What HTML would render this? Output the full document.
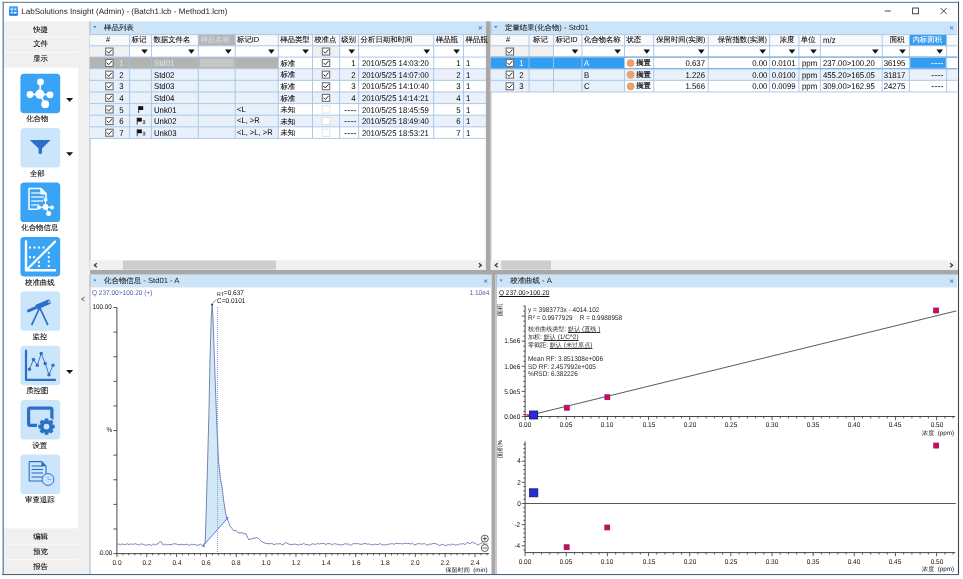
<!DOCTYPE html>
<html><head><meta charset="utf-8"><title>LabSolutions Insight</title>
<style>
html,body{margin:0;padding:0;background:#fff;}
body{width:963px;height:579px;overflow:hidden;position:relative;font-family:"Liberation Sans", sans-serif;text-rendering:geometricPrecision;}
.c{font-size:7.4px;-webkit-text-stroke:.07px currentColor}.d{font-size:6.1px}.e{font-size:7.3px;-webkit-text-stroke:.2px currentColor}
#g{position:absolute;left:0;top:0;}
#tx{position:absolute;left:0;top:0;width:963px;height:579px;filter:blur(.3px);}
.t{position:absolute;white-space:nowrap;font-family:"Liberation Sans", sans-serif;}
u,.u{text-decoration:underline;text-decoration-thickness:.6px;text-underline-offset:.6px}
</style></head><body>
<svg id="g" width="963" height="579" viewBox="0 0 963 579">
<rect x="0.00" y="0.00" width="963.00" height="579.00" fill="#ffffff" />
<rect x="3.30" y="2.30" width="955.50" height="572.40" fill="#ffffff" />
<rect x="4.00" y="21.30" width="954.60" height="553.00" fill="#f0f0f0" />
<line x1="3.20" y1="1.70" x2="3.20" y2="575.00" stroke="#7391a6" stroke-width="1.5" />
<line x1="2.40" y1="2.30" x2="959.00" y2="2.30" stroke="#7391a6" stroke-width="1.3" />
<line x1="958.60" y1="1.70" x2="958.60" y2="575.00" stroke="#3c4a5a" stroke-width="1.1" />
<line x1="2.40" y1="574.60" x2="959.00" y2="574.60" stroke="#4d6378" stroke-width="1.2" />
<rect x="9.00" y="6.40" width="9.00" height="9.40" fill="#2f8cf0" rx="1.3"/>
<rect x="9.30" y="6.60" width="8.40" height="3.40" fill="#4da3f6" rx="1"/>
<rect x="9.30" y="12.60" width="8.40" height="3.00" fill="#1f80ea" rx="1"/>
<rect x="10.60" y="8.20" width="2.40" height="2.20" fill="#cfe5fb" rx=".6"/>
<rect x="14.00" y="8.20" width="2.40" height="2.20" fill="#b8d8f9" rx=".6"/>
<rect x="10.60" y="11.60" width="2.40" height="2.20" fill="#b8d8f9" rx=".6"/>
<rect x="13.60" y="12.00" width="3.20" height="1.40" fill="#ffffff" rx=".5"/>
<line x1="884.80" y1="11.00" x2="890.80" y2="11.00" stroke="#333" stroke-width="0.9" />
<rect x="912.60" y="8.00" width="5.80" height="5.80" fill="none" stroke="#333" stroke-width=".9"/>
<line x1="940.70" y1="8.00" x2="946.70" y2="14.00" stroke="#333" stroke-width="0.9" />
<line x1="946.70" y1="8.00" x2="940.70" y2="14.00" stroke="#333" stroke-width="0.9" />
<rect x="4.20" y="67.60" width="74.00" height="460.80" fill="#ffffff" />
<line x1="5.00" y1="36.80" x2="78.20" y2="36.80" stroke="#fbfbfb" stroke-width="1" />
<line x1="5.00" y1="52.40" x2="78.20" y2="52.40" stroke="#fbfbfb" stroke-width="1" />
<line x1="5.00" y1="544.30" x2="78.20" y2="544.30" stroke="#fbfbfb" stroke-width="1" />
<line x1="5.00" y1="559.60" x2="78.20" y2="559.60" stroke="#fbfbfb" stroke-width="1" />
<path d="M84.6 297 L81.6 299 L84.6 301" fill="none" stroke="#555" stroke-width="0.9" />
<rect x="20.40" y="73.70" width="39.80" height="39.50" fill="#39a4f5" rx="3.6"/>
<path d="M66.1 97.90 L73.1 97.90 L69.6 101.70 Z" fill="#111" stroke="none" stroke-width="1" />
<rect x="20.40" y="128.10" width="39.80" height="39.50" fill="#cbe5fa" rx="3.6"/>
<path d="M66.1 152.30 L73.1 152.30 L69.6 156.10 Z" fill="#111" stroke="none" stroke-width="1" />
<rect x="20.40" y="182.50" width="39.80" height="39.50" fill="#39a4f5" rx="3.6"/>
<rect x="20.40" y="236.90" width="39.80" height="39.50" fill="#39a4f5" rx="3.6"/>
<rect x="20.40" y="291.30" width="39.80" height="39.50" fill="#cbe5fa" rx="3.6"/>
<rect x="20.40" y="345.70" width="39.80" height="39.50" fill="#cbe5fa" rx="3.6"/>
<path d="M66.1 369.90 L73.1 369.90 L69.6 373.70 Z" fill="#111" stroke="none" stroke-width="1" />
<rect x="20.40" y="400.10" width="39.80" height="39.50" fill="#cbe5fa" rx="3.6"/>
<rect x="20.40" y="454.50" width="39.80" height="39.50" fill="#cbe5fa" rx="3.6"/>
<line x1="39.80" y1="94.20" x2="40.50" y2="82.00" stroke="#fff" stroke-width="1.5" />
<line x1="39.80" y1="94.20" x2="30.00" y2="94.50" stroke="#fff" stroke-width="1.5" />
<line x1="39.80" y1="94.20" x2="50.00" y2="94.80" stroke="#fff" stroke-width="1.5" />
<line x1="39.80" y1="94.20" x2="45.20" y2="104.20" stroke="#fff" stroke-width="1.5" />
<circle cx="39.80" cy="94.20" r="4.60" fill="#fff" stroke="none" stroke-width="1"/>
<circle cx="40.50" cy="82.00" r="3.40" fill="#fff" stroke="none" stroke-width="1"/>
<circle cx="30.00" cy="94.50" r="3.40" fill="#fff" stroke="none" stroke-width="1"/>
<circle cx="50.00" cy="94.80" r="3.40" fill="#fff" stroke="none" stroke-width="1"/>
<circle cx="45.20" cy="104.20" r="3.90" fill="#fff" stroke="none" stroke-width="1"/>
<path d="M29.8 140 L50.6 140 L42 148.4 L42 153.8 L38.6 153.8 L38.6 148.4 Z" fill="#2b6fc6" stroke="none" stroke-width="1" />
<path d="M29 188.6 L41 188.6 L46 193.6 L46 198 M46 193.8 L41 193.8 L41 188.6 M29 188.6 L29 209.2 L37 209.2" fill="none" stroke="#fff" stroke-width="1.5" stroke-linejoin="round" stroke-linecap="round"/>
<path d="M41 188.6 L46 193.6 L41 193.6 Z" fill="#fff" stroke="none" stroke-width="1" />
<line x1="31.20" y1="193.00" x2="40.00" y2="193.00" stroke="#fff" stroke-width="1.2" />
<line x1="31.20" y1="197.00" x2="44.00" y2="197.00" stroke="#fff" stroke-width="1.2" />
<line x1="31.20" y1="201.00" x2="43.00" y2="201.00" stroke="#fff" stroke-width="1.2" />
<line x1="31.20" y1="205.00" x2="39.00" y2="205.00" stroke="#fff" stroke-width="1.2" />
<line x1="45.50" y1="207.00" x2="45.50" y2="199.80" stroke="#fff" stroke-width="1.1" />
<line x1="45.50" y1="207.00" x2="39.00" y2="207.40" stroke="#fff" stroke-width="1.1" />
<line x1="45.50" y1="207.00" x2="51.90" y2="207.40" stroke="#fff" stroke-width="1.1" />
<line x1="45.50" y1="207.00" x2="48.60" y2="213.60" stroke="#fff" stroke-width="1.1" />
<circle cx="45.50" cy="207.00" r="2.90" fill="#fff" stroke="none" stroke-width="1"/>
<circle cx="45.50" cy="199.80" r="2.00" fill="#fff" stroke="none" stroke-width="1"/>
<circle cx="39.00" cy="207.40" r="2.00" fill="#fff" stroke="none" stroke-width="1"/>
<circle cx="51.90" cy="207.40" r="2.00" fill="#fff" stroke="none" stroke-width="1"/>
<circle cx="48.60" cy="213.60" r="2.50" fill="#fff" stroke="none" stroke-width="1"/>
<path d="M26 241.5 L26 270.2 L55 270.2" fill="none" stroke="#fff" stroke-width="2.4" stroke-linecap="round" stroke-linejoin="round"/>
<line x1="27.50" y1="269.00" x2="55.00" y2="241.60" stroke="#fff" stroke-width="2.2" stroke-linecap="round"/>
<rect x="29.00" y="246.50" width="2.00" height="2.00" fill="#fff" />
<rect x="33.50" y="246.50" width="2.00" height="2.00" fill="#fff" />
<rect x="38.00" y="246.50" width="2.00" height="2.00" fill="#fff" />
<rect x="42.50" y="246.50" width="2.00" height="2.00" fill="#fff" />
<rect x="29.00" y="256.20" width="2.00" height="2.00" fill="#fff" />
<rect x="33.00" y="256.20" width="2.00" height="2.00" fill="#fff" />
<rect x="47.80" y="251.80" width="2.00" height="2.00" fill="#fff" />
<rect x="47.80" y="256.20" width="2.00" height="2.00" fill="#fff" />
<rect x="47.80" y="260.50" width="2.00" height="2.00" fill="#fff" />
<rect x="47.80" y="265.00" width="2.00" height="2.00" fill="#fff" />
<rect x="38.00" y="261.20" width="2.00" height="2.00" fill="#fff" />
<rect x="38.00" y="265.00" width="2.00" height="2.00" fill="#fff" />
<path d="M35.3 305.1 L48.2 299.6 Q50.9 299.7 50.6 303.7 L37.4 309.5 Z" fill="#2b6fc6" stroke="none" stroke-width="1" />
<path d="M27.2 309.7 L36 305.9 L37 308.7 L28.3 312.6 Q26.5 311.7 27.2 309.7 Z" fill="#2b6fc6" stroke="none" stroke-width="1" />
<path d="M39.6 308 L31.6 325.2 M39.9 308 L47.9 325.2" fill="none" stroke="#2b6fc6" stroke-width="1.7" />
<circle cx="49.20" cy="301.80" r="1.30" fill="#8db9ea" stroke="none" stroke-width="1"/>
<path d="M26 350.6 L26 379.9 L55 379.9" fill="none" stroke="#2b6fc6" stroke-width="2.2" stroke-linecap="round" stroke-linejoin="round"/>
<path d="M29.5 369.2 L33.5 359.5 L37.3 365.2 L41.2 353.5 L45.2 363.5 L49 374.8 L53 365.2" fill="none" stroke="#2b6fc6" stroke-width="0.9" />
<circle cx="29.50" cy="369.20" r="1.70" fill="#2b6fc6" stroke="none" stroke-width="1"/>
<circle cx="33.50" cy="359.50" r="1.70" fill="#2b6fc6" stroke="none" stroke-width="1"/>
<circle cx="37.30" cy="365.20" r="1.70" fill="#2b6fc6" stroke="none" stroke-width="1"/>
<circle cx="41.20" cy="353.50" r="1.70" fill="#2b6fc6" stroke="none" stroke-width="1"/>
<circle cx="45.20" cy="363.50" r="1.70" fill="#2b6fc6" stroke="none" stroke-width="1"/>
<circle cx="49.00" cy="374.80" r="1.70" fill="#2b6fc6" stroke="none" stroke-width="1"/>
<circle cx="53.00" cy="365.20" r="1.70" fill="#2b6fc6" stroke="none" stroke-width="1"/>
<rect x="28.60" y="408.10" width="23.30" height="17.30" fill="none" stroke="#2b6fc6" stroke-width="3.2" rx="1.6"/>
<circle cx="46.50" cy="426.60" r="9.60" fill="#cbe5fa" stroke="none" stroke-width="1"/>
<path d="M54.63 424.95 L54.63 428.25 L52.14 428.92 L52.13 428.95 L53.42 431.19 L51.09 433.52 L48.85 432.23 L48.82 432.24 L48.15 434.73 L44.85 434.73 L44.18 432.24 L44.15 432.23 L41.91 433.52 L39.58 431.19 L40.87 428.95 L40.86 428.92 L38.37 428.25 L38.37 424.95 L40.86 424.28 L40.87 424.25 L39.58 422.01 L41.91 419.68 L44.15 420.97 L44.18 420.96 L44.85 418.47 L48.15 418.47 L48.82 420.96 L48.85 420.97 L51.09 419.68 L53.42 422.01 L52.13 424.25 L52.14 424.28 Z" fill="#2b6fc6" stroke="none" stroke-width="1" />
<circle cx="46.50" cy="426.60" r="2.90" fill="#cbe5fa" stroke="none" stroke-width="1"/>
<path d="M29.2 461.6 L41.6 461.6 L46 466 L46 474 M29.2 461.6 L29.2 481 L42 481" fill="none" stroke="#2b6fc6" stroke-width="1.1" />
<path d="M41.4 461.6 L46 466.2 L41.4 466.2 Z" fill="#2b6fc6" stroke="none" stroke-width="1" />
<line x1="31.50" y1="466.00" x2="43.00" y2="466.00" stroke="#2b6fc6" stroke-width="1.1" />
<line x1="31.50" y1="469.50" x2="43.00" y2="469.50" stroke="#2b6fc6" stroke-width="1.1" />
<line x1="31.50" y1="473.00" x2="43.00" y2="473.00" stroke="#2b6fc6" stroke-width="1.1" />
<line x1="31.50" y1="477.00" x2="43.00" y2="477.00" stroke="#2b6fc6" stroke-width="1.1" />
<circle cx="48.00" cy="479.50" r="5.90" fill="#cbe5fa" stroke="#2b6fc6" stroke-width="1.0"/>
<path d="M48 476 L48 479.5 L51.5 479.5" fill="none" stroke="#7fb0e8" stroke-width="0.9" />
<rect x="485.90" y="21.30" width="4.40" height="254.00" fill="#a8a8a8" />
<rect x="491.30" y="270.00" width="4.30" height="305.00" fill="#a8a8a8" />
<rect x="90.00" y="270.00" width="868.00" height="4.80" fill="#a8a8a8" />
<rect x="89.50" y="21.50" width="396.40" height="248.50" fill="#fff" />
<rect x="89.50" y="21.50" width="396.40" height="12.70" fill="#cce4f7" />
<line x1="90.00" y1="21.50" x2="90.00" y2="270.00" stroke="#b0b0b0" stroke-width="1" />
<path d="M93.20 26.10 h3.4 l-1.7 2.2 Z" fill="#3c7fd6" stroke="none" stroke-width="1" />
<path d="M478.70 26.30 l3.2 3 M481.90 26.30 l-3.2 3" fill="none" stroke="#2a6fcf" stroke-width="0.9" />
<rect x="490.40" y="21.50" width="466.80" height="248.50" fill="#fff" />
<rect x="490.40" y="21.50" width="466.80" height="12.70" fill="#cce4f7" />
<line x1="490.90" y1="21.50" x2="490.90" y2="270.00" stroke="#b0b0b0" stroke-width="1" />
<path d="M494.10 26.10 h3.4 l-1.7 2.2 Z" fill="#3c7fd6" stroke="none" stroke-width="1" />
<path d="M950.00 26.30 l3.2 3 M953.20 26.30 l-3.2 3" fill="none" stroke="#2a6fcf" stroke-width="0.9" />
<rect x="89.50" y="274.80" width="401.80" height="299.20" fill="#fff" />
<rect x="89.50" y="274.80" width="401.80" height="12.70" fill="#cce4f7" />
<line x1="90.00" y1="274.80" x2="90.00" y2="574.00" stroke="#a8aeb6" stroke-width="1" />
<path d="M93.20 279.40 h3.4 l-1.7 2.2 Z" fill="#3c7fd6" stroke="none" stroke-width="1" />
<path d="M484.10 279.60 l3.2 3 M487.30 279.60 l-3.2 3" fill="none" stroke="#2a6fcf" stroke-width="0.9" />
<rect x="495.70" y="274.80" width="461.50" height="299.20" fill="#fff" />
<rect x="495.70" y="274.80" width="461.50" height="12.70" fill="#cce4f7" />
<line x1="496.20" y1="274.80" x2="496.20" y2="574.00" stroke="#a8aeb6" stroke-width="1" />
<path d="M499.40 279.40 h3.4 l-1.7 2.2 Z" fill="#3c7fd6" stroke="none" stroke-width="1" />
<path d="M950.00 279.60 l3.2 3 M953.20 279.60 l-3.2 3" fill="none" stroke="#2a6fcf" stroke-width="0.9" />
<rect x="89.80" y="260.20" width="396.10" height="9.80" fill="#f0f0f0" />
<rect x="123.00" y="260.60" width="153.00" height="9.00" fill="#cdcdcd" />
<path d="M96.80 263.2 l-2.4 2 l2.4 2" fill="none" stroke="#3a3a3a" stroke-width="1.3" />
<path d="M478.90 263.2 l2.4 2 l-2.4 2" fill="none" stroke="#3a3a3a" stroke-width="1.3" />
<rect x="490.60" y="260.20" width="466.60" height="9.80" fill="#f0f0f0" />
<rect x="501.40" y="260.60" width="49.60" height="9.00" fill="#cdcdcd" />
<path d="M497.60 263.2 l-2.4 2 l2.4 2" fill="none" stroke="#3a3a3a" stroke-width="1.3" />
<path d="M950.20 263.2 l2.4 2 l-2.4 2" fill="none" stroke="#3a3a3a" stroke-width="1.3" />
<rect x="89.80" y="34.60" width="396.10" height="11.20" fill="#f9f9f9" />
<rect x="198.30" y="34.60" width="36.90" height="11.20" fill="#b5b5b5" />
<rect x="89.80" y="45.80" width="396.10" height="11.30" fill="#fff" />
<rect x="89.80" y="45.80" width="39.80" height="11.30" fill="#f0f0f0" />
<rect x="312.50" y="45.80" width="27.10" height="11.30" fill="#f0f0f0" />
<rect x="89.80" y="57.10" width="188.50" height="11.62" fill="#b3b3b3" />
<rect x="199.90" y="58.70" width="33.90" height="8.42" fill="#c6c6c6" />
<rect x="89.80" y="68.72" width="188.50" height="11.62" fill="#e8f0fa" />
<rect x="278.30" y="68.72" width="207.60" height="11.62" fill="#eaf1fb" />
<rect x="89.80" y="80.34" width="188.50" height="11.62" fill="#e8f0fa" />
<rect x="89.80" y="91.96" width="188.50" height="11.62" fill="#e8f0fa" />
<rect x="278.30" y="91.96" width="207.60" height="11.62" fill="#eaf1fb" />
<rect x="89.80" y="103.58" width="188.50" height="11.62" fill="#e8f0fa" />
<rect x="89.80" y="115.20" width="188.50" height="11.62" fill="#e8f0fa" />
<rect x="278.30" y="115.20" width="207.60" height="11.62" fill="#eaf1fb" />
<rect x="89.80" y="126.82" width="188.50" height="11.62" fill="#e8f0fa" />
<line x1="129.60" y1="34.60" x2="129.60" y2="138.44" stroke="#a3c4e6" stroke-width="0.9" />
<line x1="151.40" y1="34.60" x2="151.40" y2="138.44" stroke="#a3c4e6" stroke-width="0.9" />
<line x1="198.30" y1="34.60" x2="198.30" y2="138.44" stroke="#a3c4e6" stroke-width="0.9" />
<line x1="235.20" y1="34.60" x2="235.20" y2="138.44" stroke="#a3c4e6" stroke-width="0.9" />
<line x1="278.30" y1="34.60" x2="278.30" y2="138.44" stroke="#a3c4e6" stroke-width="0.9" />
<line x1="312.50" y1="34.60" x2="312.50" y2="138.44" stroke="#a3c4e6" stroke-width="0.9" />
<line x1="339.60" y1="34.60" x2="339.60" y2="138.44" stroke="#a3c4e6" stroke-width="0.9" />
<line x1="358.60" y1="34.60" x2="358.60" y2="138.44" stroke="#a3c4e6" stroke-width="0.9" />
<line x1="433.70" y1="34.60" x2="433.70" y2="138.44" stroke="#a3c4e6" stroke-width="0.9" />
<line x1="463.50" y1="34.60" x2="463.50" y2="138.44" stroke="#a3c4e6" stroke-width="0.9" />
<line x1="89.80" y1="34.60" x2="485.90" y2="34.60" stroke="#a3c4e6" stroke-width="0.9" />
<line x1="89.80" y1="45.80" x2="485.90" y2="45.80" stroke="#a3c4e6" stroke-width="0.9" />
<line x1="89.80" y1="57.10" x2="485.90" y2="57.10" stroke="#a3c4e6" stroke-width="0.9" />
<line x1="89.80" y1="68.72" x2="485.90" y2="68.72" stroke="#a3c4e6" stroke-width="0.9" />
<line x1="89.80" y1="80.34" x2="485.90" y2="80.34" stroke="#a3c4e6" stroke-width="0.9" />
<line x1="89.80" y1="91.96" x2="485.90" y2="91.96" stroke="#a3c4e6" stroke-width="0.9" />
<line x1="89.80" y1="103.58" x2="485.90" y2="103.58" stroke="#a3c4e6" stroke-width="0.9" />
<line x1="89.80" y1="115.20" x2="485.90" y2="115.20" stroke="#a3c4e6" stroke-width="0.9" />
<line x1="89.80" y1="126.82" x2="485.90" y2="126.82" stroke="#a3c4e6" stroke-width="0.9" />
<line x1="89.80" y1="138.44" x2="485.90" y2="138.44" stroke="#a3c4e6" stroke-width="0.9" />
<rect x="105.70" y="48.05" width="7.40" height="7.00" fill="#fff" stroke="#707070" stroke-width="1.1"/>
<path d="M106.90 51.35 l1.8 1.9 l3.3 -3.7" fill="none" stroke="#2a2a2a" stroke-width="1.0" />
<rect x="322.30" y="48.05" width="7.40" height="7.00" fill="#fff" stroke="#707070" stroke-width="1.1"/>
<path d="M323.50 51.35 l1.8 1.9 l3.3 -3.7" fill="none" stroke="#2a2a2a" stroke-width="1.0" />
<path d="M141.20 49.45 h6.6 l-3.3 4.3 Z" fill="#111" stroke="none" stroke-width="1" />
<path d="M188.10 49.45 h6.6 l-3.3 4.3 Z" fill="#111" stroke="none" stroke-width="1" />
<path d="M225.00 49.45 h6.6 l-3.3 4.3 Z" fill="#111" stroke="none" stroke-width="1" />
<path d="M268.10 49.45 h6.6 l-3.3 4.3 Z" fill="#111" stroke="none" stroke-width="1" />
<path d="M302.30 49.45 h6.6 l-3.3 4.3 Z" fill="#111" stroke="none" stroke-width="1" />
<path d="M348.40 49.45 h6.6 l-3.3 4.3 Z" fill="#111" stroke="none" stroke-width="1" />
<path d="M423.50 49.45 h6.6 l-3.3 4.3 Z" fill="#111" stroke="none" stroke-width="1" />
<path d="M453.30 49.45 h6.6 l-3.3 4.3 Z" fill="#111" stroke="none" stroke-width="1" />
<rect x="105.70" y="59.51" width="7.40" height="7.00" fill="#fff" stroke="#707070" stroke-width="1.1"/>
<path d="M106.90 62.81 l1.8 1.9 l3.3 -3.7" fill="none" stroke="#2a2a2a" stroke-width="1.0" />
<rect x="322.30" y="59.51" width="7.40" height="7.00" fill="#fff" stroke="#707070" stroke-width="1.1"/>
<path d="M323.50 62.81 l1.8 1.9 l3.3 -3.7" fill="none" stroke="#2a2a2a" stroke-width="1.0" />
<rect x="105.70" y="71.13" width="7.40" height="7.00" fill="#fff" stroke="#707070" stroke-width="1.1"/>
<path d="M106.90 74.43 l1.8 1.9 l3.3 -3.7" fill="none" stroke="#2a2a2a" stroke-width="1.0" />
<rect x="322.30" y="71.13" width="7.40" height="7.00" fill="#fff" stroke="#707070" stroke-width="1.1"/>
<path d="M323.50 74.43 l1.8 1.9 l3.3 -3.7" fill="none" stroke="#2a2a2a" stroke-width="1.0" />
<rect x="105.70" y="82.75" width="7.40" height="7.00" fill="#fff" stroke="#707070" stroke-width="1.1"/>
<path d="M106.90 86.05 l1.8 1.9 l3.3 -3.7" fill="none" stroke="#2a2a2a" stroke-width="1.0" />
<rect x="322.30" y="82.75" width="7.40" height="7.00" fill="#fff" stroke="#707070" stroke-width="1.1"/>
<path d="M323.50 86.05 l1.8 1.9 l3.3 -3.7" fill="none" stroke="#2a2a2a" stroke-width="1.0" />
<rect x="105.70" y="94.37" width="7.40" height="7.00" fill="#fff" stroke="#707070" stroke-width="1.1"/>
<path d="M106.90 97.67 l1.8 1.9 l3.3 -3.7" fill="none" stroke="#2a2a2a" stroke-width="1.0" />
<rect x="322.30" y="94.37" width="7.40" height="7.00" fill="#fff" stroke="#707070" stroke-width="1.1"/>
<path d="M323.50 97.67 l1.8 1.9 l3.3 -3.7" fill="none" stroke="#2a2a2a" stroke-width="1.0" />
<rect x="105.70" y="105.99" width="7.40" height="7.00" fill="#fff" stroke="#707070" stroke-width="1.1"/>
<path d="M106.90 109.29 l1.8 1.9 l3.3 -3.7" fill="none" stroke="#2a2a2a" stroke-width="1.0" />
<rect x="322.10" y="105.89" width="7.80" height="7.20" fill="#fff" stroke="#dcdcdc" stroke-width=".8"/>
<rect x="105.70" y="117.61" width="7.40" height="7.00" fill="#fff" stroke="#707070" stroke-width="1.1"/>
<path d="M106.90 120.91 l1.8 1.9 l3.3 -3.7" fill="none" stroke="#2a2a2a" stroke-width="1.0" />
<rect x="322.10" y="117.51" width="7.80" height="7.20" fill="#fff" stroke="#dcdcdc" stroke-width=".8"/>
<rect x="105.70" y="129.23" width="7.40" height="7.00" fill="#fff" stroke="#707070" stroke-width="1.1"/>
<path d="M106.90 132.53 l1.8 1.9 l3.3 -3.7" fill="none" stroke="#2a2a2a" stroke-width="1.0" />
<rect x="322.10" y="129.13" width="7.80" height="7.20" fill="#fff" stroke="#dcdcdc" stroke-width=".8"/>
<line x1="138.60" y1="106.19" x2="138.60" y2="112.99" stroke="#111" stroke-width="0.8" />
<path d="M138.60 106.19 h4.6 v3.8 h-4.6 Z" fill="#111" stroke="none" stroke-width="1" />
<line x1="137.20" y1="117.81" x2="137.20" y2="124.61" stroke="#111" stroke-width="0.8" />
<path d="M137.20 117.81 h4.6 v3.8 h-4.6 Z" fill="#111" stroke="none" stroke-width="1" />
<path d="M142.80 120.61 h2 v3 h-2 M142.80 122.11 h2" fill="none" stroke="#222" stroke-width="0.6" />
<line x1="137.20" y1="129.43" x2="137.20" y2="136.23" stroke="#111" stroke-width="0.8" />
<path d="M137.20 129.43 h4.6 v3.8 h-4.6 Z" fill="#111" stroke="none" stroke-width="1" />
<path d="M142.80 132.23 h2 v3 h-2 M142.80 133.73 h2" fill="none" stroke="#222" stroke-width="0.6" />
<rect x="485.90" y="30.00" width="4.40" height="240.00" fill="#a8a8a8" />
<rect x="490.70" y="34.60" width="466.50" height="11.20" fill="#f9f9f9" />
<rect x="909.40" y="34.60" width="37.20" height="11.20" fill="#339df2" />
<rect x="490.70" y="45.80" width="466.50" height="11.30" fill="#fff" />
<rect x="490.70" y="45.80" width="62.80" height="11.30" fill="#f0f0f0" />
<rect x="490.70" y="57.10" width="133.80" height="11.62" fill="#339df2" />
<rect x="910.20" y="57.90" width="35.60" height="10.02" fill="#339df2" />
<rect x="490.70" y="68.72" width="133.80" height="11.62" fill="#e8f0fa" />
<rect x="624.50" y="68.72" width="332.70" height="11.62" fill="#eaf1fb" />
<rect x="490.70" y="80.34" width="133.80" height="11.62" fill="#e8f0fa" />
<line x1="529.10" y1="34.60" x2="529.10" y2="91.96" stroke="#a3c4e6" stroke-width="0.9" />
<line x1="553.50" y1="34.60" x2="553.50" y2="91.96" stroke="#a3c4e6" stroke-width="0.9" />
<line x1="581.90" y1="34.60" x2="581.90" y2="91.96" stroke="#a3c4e6" stroke-width="0.9" />
<line x1="624.50" y1="34.60" x2="624.50" y2="91.96" stroke="#a3c4e6" stroke-width="0.9" />
<line x1="653.70" y1="34.60" x2="653.70" y2="91.96" stroke="#a3c4e6" stroke-width="0.9" />
<line x1="708.20" y1="34.60" x2="708.20" y2="91.96" stroke="#a3c4e6" stroke-width="0.9" />
<line x1="769.60" y1="34.60" x2="769.60" y2="91.96" stroke="#a3c4e6" stroke-width="0.9" />
<line x1="798.90" y1="34.60" x2="798.90" y2="91.96" stroke="#a3c4e6" stroke-width="0.9" />
<line x1="820.40" y1="34.60" x2="820.40" y2="91.96" stroke="#a3c4e6" stroke-width="0.9" />
<line x1="882.20" y1="34.60" x2="882.20" y2="91.96" stroke="#a3c4e6" stroke-width="0.9" />
<line x1="909.40" y1="34.60" x2="909.40" y2="91.96" stroke="#a3c4e6" stroke-width="0.9" />
<line x1="946.60" y1="34.60" x2="946.60" y2="91.96" stroke="#a3c4e6" stroke-width="0.9" />
<line x1="490.70" y1="34.60" x2="957.20" y2="34.60" stroke="#a3c4e6" stroke-width="0.9" />
<line x1="490.70" y1="45.80" x2="957.20" y2="45.80" stroke="#a3c4e6" stroke-width="0.9" />
<line x1="490.70" y1="57.10" x2="957.20" y2="57.10" stroke="#a3c4e6" stroke-width="0.9" />
<line x1="490.70" y1="68.72" x2="957.20" y2="68.72" stroke="#a3c4e6" stroke-width="0.9" />
<line x1="490.70" y1="80.34" x2="957.20" y2="80.34" stroke="#a3c4e6" stroke-width="0.9" />
<line x1="490.70" y1="91.96" x2="957.20" y2="91.96" stroke="#a3c4e6" stroke-width="0.9" />
<line x1="490.70" y1="57.10" x2="957.20" y2="57.10" stroke="#7fb2e6" stroke-width="1.2" />
<line x1="490.70" y1="68.72" x2="957.20" y2="68.72" stroke="#7fb2e6" stroke-width="1.2" />
<rect x="506.15" y="48.05" width="7.40" height="7.00" fill="#fff" stroke="#707070" stroke-width="1.1"/>
<path d="M507.35 51.35 l1.8 1.9 l3.3 -3.7" fill="none" stroke="#2a2a2a" stroke-width="1.0" />
<path d="M571.70 49.45 h6.6 l-3.3 4.3 Z" fill="#111" stroke="none" stroke-width="1" />
<path d="M614.30 49.45 h6.6 l-3.3 4.3 Z" fill="#111" stroke="none" stroke-width="1" />
<path d="M643.50 49.45 h6.6 l-3.3 4.3 Z" fill="#111" stroke="none" stroke-width="1" />
<path d="M698.00 49.45 h6.6 l-3.3 4.3 Z" fill="#111" stroke="none" stroke-width="1" />
<path d="M759.40 49.45 h6.6 l-3.3 4.3 Z" fill="#111" stroke="none" stroke-width="1" />
<path d="M788.70 49.45 h6.6 l-3.3 4.3 Z" fill="#111" stroke="none" stroke-width="1" />
<path d="M810.20 49.45 h6.6 l-3.3 4.3 Z" fill="#111" stroke="none" stroke-width="1" />
<path d="M872.00 49.45 h6.6 l-3.3 4.3 Z" fill="#111" stroke="none" stroke-width="1" />
<path d="M899.20 49.45 h6.6 l-3.3 4.3 Z" fill="#111" stroke="none" stroke-width="1" />
<path d="M936.40 49.45 h6.6 l-3.3 4.3 Z" fill="#111" stroke="none" stroke-width="1" />
<rect x="506.15" y="59.51" width="7.40" height="7.00" fill="#fff" stroke="#707070" stroke-width="1.1"/>
<path d="M507.35 62.81 l1.8 1.9 l3.3 -3.7" fill="none" stroke="#2a2a2a" stroke-width="1.0" />
<circle cx="630.60" cy="63.11" r="3.90" fill="#e9a26e" stroke="none" stroke-width="1"/>
<rect x="506.15" y="71.13" width="7.40" height="7.00" fill="#fff" stroke="#707070" stroke-width="1.1"/>
<path d="M507.35 74.43 l1.8 1.9 l3.3 -3.7" fill="none" stroke="#2a2a2a" stroke-width="1.0" />
<circle cx="630.60" cy="74.73" r="3.90" fill="#e9a26e" stroke="none" stroke-width="1"/>
<rect x="506.15" y="82.75" width="7.40" height="7.00" fill="#fff" stroke="#707070" stroke-width="1.1"/>
<path d="M507.35 86.05 l1.8 1.9 l3.3 -3.7" fill="none" stroke="#2a2a2a" stroke-width="1.0" />
<circle cx="630.60" cy="86.35" r="3.90" fill="#e9a26e" stroke="none" stroke-width="1"/>
<line x1="116.90" y1="307.50" x2="116.90" y2="553.60" stroke="#333" stroke-width="0.9" />
<line x1="116.90" y1="553.60" x2="489.00" y2="553.60" stroke="#333" stroke-width="0.9" />
<line x1="113.30" y1="307.50" x2="116.90" y2="307.50" stroke="#333" stroke-width="0.8" />
<line x1="113.30" y1="332.11" x2="116.90" y2="332.11" stroke="#333" stroke-width="0.8" />
<line x1="113.30" y1="356.72" x2="116.90" y2="356.72" stroke="#333" stroke-width="0.8" />
<line x1="113.30" y1="381.33" x2="116.90" y2="381.33" stroke="#333" stroke-width="0.8" />
<line x1="113.30" y1="405.94" x2="116.90" y2="405.94" stroke="#333" stroke-width="0.8" />
<line x1="113.30" y1="430.55" x2="116.90" y2="430.55" stroke="#333" stroke-width="0.8" />
<line x1="113.30" y1="455.16" x2="116.90" y2="455.16" stroke="#333" stroke-width="0.8" />
<line x1="113.30" y1="479.77" x2="116.90" y2="479.77" stroke="#333" stroke-width="0.8" />
<line x1="113.30" y1="504.38" x2="116.90" y2="504.38" stroke="#333" stroke-width="0.8" />
<line x1="113.30" y1="528.99" x2="116.90" y2="528.99" stroke="#333" stroke-width="0.8" />
<line x1="113.30" y1="553.60" x2="116.90" y2="553.60" stroke="#333" stroke-width="0.8" />
<line x1="116.90" y1="553.60" x2="116.90" y2="557.00" stroke="#333" stroke-width="0.8" />
<line x1="122.87" y1="553.60" x2="122.87" y2="555.40" stroke="#333" stroke-width="0.8" />
<line x1="128.84" y1="553.60" x2="128.84" y2="555.40" stroke="#333" stroke-width="0.8" />
<line x1="134.80" y1="553.60" x2="134.80" y2="555.40" stroke="#333" stroke-width="0.8" />
<line x1="140.77" y1="553.60" x2="140.77" y2="555.40" stroke="#333" stroke-width="0.8" />
<line x1="146.74" y1="553.60" x2="146.74" y2="557.00" stroke="#333" stroke-width="0.8" />
<line x1="152.71" y1="553.60" x2="152.71" y2="555.40" stroke="#333" stroke-width="0.8" />
<line x1="158.68" y1="553.60" x2="158.68" y2="555.40" stroke="#333" stroke-width="0.8" />
<line x1="164.64" y1="553.60" x2="164.64" y2="555.40" stroke="#333" stroke-width="0.8" />
<line x1="170.61" y1="553.60" x2="170.61" y2="555.40" stroke="#333" stroke-width="0.8" />
<line x1="176.58" y1="553.60" x2="176.58" y2="557.00" stroke="#333" stroke-width="0.8" />
<line x1="182.55" y1="553.60" x2="182.55" y2="555.40" stroke="#333" stroke-width="0.8" />
<line x1="188.52" y1="553.60" x2="188.52" y2="555.40" stroke="#333" stroke-width="0.8" />
<line x1="194.48" y1="553.60" x2="194.48" y2="555.40" stroke="#333" stroke-width="0.8" />
<line x1="200.45" y1="553.60" x2="200.45" y2="555.40" stroke="#333" stroke-width="0.8" />
<line x1="206.42" y1="553.60" x2="206.42" y2="557.00" stroke="#333" stroke-width="0.8" />
<line x1="212.39" y1="553.60" x2="212.39" y2="555.40" stroke="#333" stroke-width="0.8" />
<line x1="218.36" y1="553.60" x2="218.36" y2="555.40" stroke="#333" stroke-width="0.8" />
<line x1="224.32" y1="553.60" x2="224.32" y2="555.40" stroke="#333" stroke-width="0.8" />
<line x1="230.29" y1="553.60" x2="230.29" y2="555.40" stroke="#333" stroke-width="0.8" />
<line x1="236.26" y1="553.60" x2="236.26" y2="557.00" stroke="#333" stroke-width="0.8" />
<line x1="242.23" y1="553.60" x2="242.23" y2="555.40" stroke="#333" stroke-width="0.8" />
<line x1="248.20" y1="553.60" x2="248.20" y2="555.40" stroke="#333" stroke-width="0.8" />
<line x1="254.16" y1="553.60" x2="254.16" y2="555.40" stroke="#333" stroke-width="0.8" />
<line x1="260.13" y1="553.60" x2="260.13" y2="555.40" stroke="#333" stroke-width="0.8" />
<line x1="266.10" y1="553.60" x2="266.10" y2="557.00" stroke="#333" stroke-width="0.8" />
<line x1="272.07" y1="553.60" x2="272.07" y2="555.40" stroke="#333" stroke-width="0.8" />
<line x1="278.04" y1="553.60" x2="278.04" y2="555.40" stroke="#333" stroke-width="0.8" />
<line x1="284.00" y1="553.60" x2="284.00" y2="555.40" stroke="#333" stroke-width="0.8" />
<line x1="289.97" y1="553.60" x2="289.97" y2="555.40" stroke="#333" stroke-width="0.8" />
<line x1="295.94" y1="553.60" x2="295.94" y2="557.00" stroke="#333" stroke-width="0.8" />
<line x1="301.91" y1="553.60" x2="301.91" y2="555.40" stroke="#333" stroke-width="0.8" />
<line x1="307.88" y1="553.60" x2="307.88" y2="555.40" stroke="#333" stroke-width="0.8" />
<line x1="313.84" y1="553.60" x2="313.84" y2="555.40" stroke="#333" stroke-width="0.8" />
<line x1="319.81" y1="553.60" x2="319.81" y2="555.40" stroke="#333" stroke-width="0.8" />
<line x1="325.78" y1="553.60" x2="325.78" y2="557.00" stroke="#333" stroke-width="0.8" />
<line x1="331.75" y1="553.60" x2="331.75" y2="555.40" stroke="#333" stroke-width="0.8" />
<line x1="337.72" y1="553.60" x2="337.72" y2="555.40" stroke="#333" stroke-width="0.8" />
<line x1="343.68" y1="553.60" x2="343.68" y2="555.40" stroke="#333" stroke-width="0.8" />
<line x1="349.65" y1="553.60" x2="349.65" y2="555.40" stroke="#333" stroke-width="0.8" />
<line x1="355.62" y1="553.60" x2="355.62" y2="557.00" stroke="#333" stroke-width="0.8" />
<line x1="361.59" y1="553.60" x2="361.59" y2="555.40" stroke="#333" stroke-width="0.8" />
<line x1="367.56" y1="553.60" x2="367.56" y2="555.40" stroke="#333" stroke-width="0.8" />
<line x1="373.52" y1="553.60" x2="373.52" y2="555.40" stroke="#333" stroke-width="0.8" />
<line x1="379.49" y1="553.60" x2="379.49" y2="555.40" stroke="#333" stroke-width="0.8" />
<line x1="385.46" y1="553.60" x2="385.46" y2="557.00" stroke="#333" stroke-width="0.8" />
<line x1="391.43" y1="553.60" x2="391.43" y2="555.40" stroke="#333" stroke-width="0.8" />
<line x1="397.40" y1="553.60" x2="397.40" y2="555.40" stroke="#333" stroke-width="0.8" />
<line x1="403.36" y1="553.60" x2="403.36" y2="555.40" stroke="#333" stroke-width="0.8" />
<line x1="409.33" y1="553.60" x2="409.33" y2="555.40" stroke="#333" stroke-width="0.8" />
<line x1="415.30" y1="553.60" x2="415.30" y2="557.00" stroke="#333" stroke-width="0.8" />
<line x1="421.27" y1="553.60" x2="421.27" y2="555.40" stroke="#333" stroke-width="0.8" />
<line x1="427.24" y1="553.60" x2="427.24" y2="555.40" stroke="#333" stroke-width="0.8" />
<line x1="433.20" y1="553.60" x2="433.20" y2="555.40" stroke="#333" stroke-width="0.8" />
<line x1="439.17" y1="553.60" x2="439.17" y2="555.40" stroke="#333" stroke-width="0.8" />
<line x1="445.14" y1="553.60" x2="445.14" y2="557.00" stroke="#333" stroke-width="0.8" />
<line x1="451.11" y1="553.60" x2="451.11" y2="555.40" stroke="#333" stroke-width="0.8" />
<line x1="457.08" y1="553.60" x2="457.08" y2="555.40" stroke="#333" stroke-width="0.8" />
<line x1="463.04" y1="553.60" x2="463.04" y2="555.40" stroke="#333" stroke-width="0.8" />
<line x1="469.01" y1="553.60" x2="469.01" y2="555.40" stroke="#333" stroke-width="0.8" />
<line x1="474.98" y1="553.60" x2="474.98" y2="557.00" stroke="#333" stroke-width="0.8" />
<line x1="480.95" y1="553.60" x2="480.95" y2="555.40" stroke="#333" stroke-width="0.8" />
<line x1="486.92" y1="553.60" x2="486.92" y2="555.40" stroke="#333" stroke-width="0.8" />
<path d="M203.6 545.2 L205.2 542.0 L206.4 505.0 L207.6 462.0 L208.8 418.0 L210.0 360.0 L211.2 318.0 L212.1 305.2 L213.0 318.0 L214.2 352.0 L215.6 392.0 L217.0 430.0 L218.6 462.0 L220.4 478.0 L222.0 487.0 L224.0 503.0 L225.8 514.0 L227.2 518.6 Z" fill="#d3e9f5" stroke="none" stroke-width="1" />
<path d="M117.2 544.3 L118.9 544.0 L120.6 544.9 L122.3 543.8 L124.0 544.7 L125.7 544.4 L127.4 543.8 L129.1 544.6 L130.8 543.8 L132.5 544.5 L134.2 543.8 L135.9 543.9 L137.6 544.5 L139.3 545.2 L141.0 543.9 L142.7 544.1 L144.4 544.8 L146.1 545.4 L147.8 544.7 L149.5 544.4 L151.2 545.5 L152.9 543.8 L154.6 545.2 L156.3 544.2 L158.0 544.0 L159.7 541.7 L161.4 542.1 L163.1 545.2 L164.8 544.0 L166.5 544.7 L168.2 544.9 L169.9 544.4 L171.6 544.7 L173.3 543.8 L175.0 543.8 L176.7 544.1 L178.4 544.9 L180.1 544.5 L181.8 544.3 L183.5 544.8 L185.2 544.5 L186.9 544.2 L188.6 545.1 L190.3 545.0 L192.0 544.1 L193.7 544.7 L195.4 544.6 L197.1 545.3 L198.8 545.0 L200.5 544.2 L202.2 545.5 L203.6 545.2 L205.2 542.0 L206.4 505.0 L207.6 462.0 L208.8 418.0 L210.0 360.0 L211.2 318.0 L212.1 305.2 L213.0 318.0 L214.2 352.0 L215.6 392.0 L217.0 430.0 L218.6 462.0 L220.4 478.0 L222.0 487.0 L224.0 503.0 L225.8 514.0 L227.2 518.6 L228.6 522.5 L230.0 526.0 L232.0 528.5 L234.0 531.0 L236.0 530.2 L238.0 532.6 L240.0 533.2 L242.0 532.4 L244.0 534.0 L246.0 533.6 L247.4 537.0 L248.8 539.8 L251.0 539.0 L254.0 538.2 L257.0 537.6 L259.0 538.8 L261.0 541.0 L264.0 542.8 L267.0 543.6 L270.0 543.8 L271.5 543.5 L273.2 544.1 L274.9 544.7 L276.6 543.6 L278.3 544.2 L280.0 543.4 L281.7 544.5 L283.4 544.7 L285.1 542.5 L286.8 543.1 L288.5 543.9 L290.2 544.6 L291.9 544.4 L293.6 544.3 L295.3 544.1 L297.0 544.8 L298.7 545.0 L300.4 544.2 L302.1 544.5 L303.8 543.4 L305.5 544.6 L307.2 544.5 L308.9 545.1 L310.6 544.8 L312.3 543.8 L314.0 544.0 L315.7 544.5 L317.4 543.3 L319.1 544.1 L320.8 543.6 L322.5 543.5 L324.2 543.4 L325.9 544.7 L327.6 543.5 L329.3 543.7 L331.0 544.0 L332.7 544.9 L334.4 543.4 L336.1 544.1 L337.8 544.3 L339.5 544.9 L341.2 544.8 L342.9 544.9 L344.6 543.8 L346.3 544.0 L348.0 543.9 L349.7 544.9 L351.4 545.0 L353.1 543.6 L354.8 543.6 L356.5 543.7 L358.2 543.7 L359.9 544.2 L361.6 544.4 L363.3 543.8 L365.0 543.3 L366.7 544.1 L368.4 544.0 L370.1 544.3 L371.8 545.0 L373.5 544.5 L375.2 544.2 L376.9 544.4 L378.6 544.5 L380.3 543.4 L382.0 544.9 L383.7 544.7 L385.4 544.9 L387.1 544.7 L388.8 544.0 L390.5 544.0 L392.2 543.5 L393.9 544.4 L395.6 543.4 L397.3 543.4 L399.0 543.7 L400.7 543.6 L402.4 543.9 L404.1 543.4 L405.8 543.3 L407.5 543.6 L409.2 543.5 L410.9 544.0 L412.6 543.3 L414.3 544.9 L416.0 544.4 L417.7 543.6 L419.4 543.8 L421.1 543.9 L422.8 544.0 L424.5 543.5 L426.2 544.8 L427.9 545.1 L429.6 544.1 L431.3 544.2 L433.0 543.5 L434.7 543.5 L436.4 543.9 L438.1 544.7 L439.8 545.7 L441.5 544.5 L443.2 544.2 L444.9 545.9 L446.6 545.2 L448.3 544.5 L450.0 545.2 L451.7 544.2 L453.4 544.3 L455.1 545.1 L456.8 544.9 L458.5 544.6 L460.2 543.8 L461.9 544.0 L463.6 543.6 L465.3 544.7 L467.0 542.5 L468.7 542.9 L470.4 543.9 L472.1 541.9 L473.8 543.0 L475.5 543.3 L477.2 544.8 L478.9 544.8 L480.6 543.0 L482.3 542.8 L484.0 543.7 L485.7 544.2 L487.4 543.9" fill="none" stroke="#5868a6" stroke-width="0.8" stroke-linejoin="round"/>
<line x1="203.60" y1="545.20" x2="227.20" y2="518.60" stroke="#4a6ee0" stroke-width="0.9" />
<line x1="217.60" y1="307.00" x2="217.60" y2="553.60" stroke="#5a78e0" stroke-width="0.75" stroke-dasharray="1 1"/>
<path d="M202.4 547 h2.6 l-1.3 -2.4 Z" fill="#4a6ee0" stroke="none" stroke-width="1" />
<path d="M226 517 h2.6 l-1.3 2.4 Z" fill="#4a6ee0" stroke="none" stroke-width="1" />
<path d="M212.1 303.3 l1.2 1.3 l-1.2 1.3 l-1.2 -1.3 Z" fill="#1d3272" stroke="none" stroke-width="1" />
<line x1="212.60" y1="303.60" x2="216.00" y2="299.60" stroke="#555" stroke-width="0.6" />
<circle cx="484.80" cy="538.60" r="3.50" fill="#fff" stroke="#333" stroke-width="0.8"/>
<line x1="482.80" y1="538.60" x2="486.80" y2="538.60" stroke="#333" stroke-width="0.8" />
<line x1="484.80" y1="536.60" x2="484.80" y2="540.60" stroke="#333" stroke-width="0.8" />
<circle cx="484.80" cy="548.00" r="3.50" fill="#fff" stroke="#333" stroke-width="0.8"/>
<line x1="482.80" y1="548.00" x2="486.80" y2="548.00" stroke="#333" stroke-width="0.8" />
<rect x="99.00" y="553.20" width="1.60" height="1.40" fill="#f5a040" />
<line x1="525.10" y1="305.60" x2="525.10" y2="416.50" stroke="#333" stroke-width="0.9" />
<line x1="525.10" y1="416.50" x2="955.20" y2="416.50" stroke="#333" stroke-width="0.9" />
<line x1="521.70" y1="416.50" x2="525.10" y2="416.50" stroke="#333" stroke-width="0.8" />
<line x1="523.30" y1="411.48" x2="525.10" y2="411.48" stroke="#333" stroke-width="0.8" />
<line x1="523.30" y1="406.46" x2="525.10" y2="406.46" stroke="#333" stroke-width="0.8" />
<line x1="523.30" y1="401.44" x2="525.10" y2="401.44" stroke="#333" stroke-width="0.8" />
<line x1="523.30" y1="396.42" x2="525.10" y2="396.42" stroke="#333" stroke-width="0.8" />
<line x1="521.70" y1="391.40" x2="525.10" y2="391.40" stroke="#333" stroke-width="0.8" />
<line x1="523.30" y1="386.38" x2="525.10" y2="386.38" stroke="#333" stroke-width="0.8" />
<line x1="523.30" y1="381.36" x2="525.10" y2="381.36" stroke="#333" stroke-width="0.8" />
<line x1="523.30" y1="376.34" x2="525.10" y2="376.34" stroke="#333" stroke-width="0.8" />
<line x1="523.30" y1="371.32" x2="525.10" y2="371.32" stroke="#333" stroke-width="0.8" />
<line x1="521.70" y1="366.30" x2="525.10" y2="366.30" stroke="#333" stroke-width="0.8" />
<line x1="523.30" y1="361.28" x2="525.10" y2="361.28" stroke="#333" stroke-width="0.8" />
<line x1="523.30" y1="356.26" x2="525.10" y2="356.26" stroke="#333" stroke-width="0.8" />
<line x1="523.30" y1="351.24" x2="525.10" y2="351.24" stroke="#333" stroke-width="0.8" />
<line x1="523.30" y1="346.22" x2="525.10" y2="346.22" stroke="#333" stroke-width="0.8" />
<line x1="521.70" y1="341.20" x2="525.10" y2="341.20" stroke="#333" stroke-width="0.8" />
<line x1="523.30" y1="336.18" x2="525.10" y2="336.18" stroke="#333" stroke-width="0.8" />
<line x1="523.30" y1="331.16" x2="525.10" y2="331.16" stroke="#333" stroke-width="0.8" />
<line x1="523.30" y1="326.14" x2="525.10" y2="326.14" stroke="#333" stroke-width="0.8" />
<line x1="523.30" y1="321.12" x2="525.10" y2="321.12" stroke="#333" stroke-width="0.8" />
<line x1="521.70" y1="316.10" x2="525.10" y2="316.10" stroke="#333" stroke-width="0.8" />
<line x1="523.30" y1="311.08" x2="525.10" y2="311.08" stroke="#333" stroke-width="0.8" />
<line x1="523.30" y1="306.06" x2="525.10" y2="306.06" stroke="#333" stroke-width="0.8" />
<line x1="525.10" y1="416.50" x2="525.10" y2="420.10" stroke="#333" stroke-width="0.8" />
<line x1="533.33" y1="416.50" x2="533.33" y2="418.40" stroke="#333" stroke-width="0.8" />
<line x1="541.56" y1="416.50" x2="541.56" y2="418.40" stroke="#333" stroke-width="0.8" />
<line x1="549.79" y1="416.50" x2="549.79" y2="418.40" stroke="#333" stroke-width="0.8" />
<line x1="558.02" y1="416.50" x2="558.02" y2="418.40" stroke="#333" stroke-width="0.8" />
<line x1="566.25" y1="416.50" x2="566.25" y2="420.10" stroke="#333" stroke-width="0.8" />
<line x1="574.48" y1="416.50" x2="574.48" y2="418.40" stroke="#333" stroke-width="0.8" />
<line x1="582.71" y1="416.50" x2="582.71" y2="418.40" stroke="#333" stroke-width="0.8" />
<line x1="590.94" y1="416.50" x2="590.94" y2="418.40" stroke="#333" stroke-width="0.8" />
<line x1="599.17" y1="416.50" x2="599.17" y2="418.40" stroke="#333" stroke-width="0.8" />
<line x1="607.40" y1="416.50" x2="607.40" y2="420.10" stroke="#333" stroke-width="0.8" />
<line x1="615.63" y1="416.50" x2="615.63" y2="418.40" stroke="#333" stroke-width="0.8" />
<line x1="623.86" y1="416.50" x2="623.86" y2="418.40" stroke="#333" stroke-width="0.8" />
<line x1="632.09" y1="416.50" x2="632.09" y2="418.40" stroke="#333" stroke-width="0.8" />
<line x1="640.32" y1="416.50" x2="640.32" y2="418.40" stroke="#333" stroke-width="0.8" />
<line x1="648.55" y1="416.50" x2="648.55" y2="420.10" stroke="#333" stroke-width="0.8" />
<line x1="656.78" y1="416.50" x2="656.78" y2="418.40" stroke="#333" stroke-width="0.8" />
<line x1="665.01" y1="416.50" x2="665.01" y2="418.40" stroke="#333" stroke-width="0.8" />
<line x1="673.24" y1="416.50" x2="673.24" y2="418.40" stroke="#333" stroke-width="0.8" />
<line x1="681.47" y1="416.50" x2="681.47" y2="418.40" stroke="#333" stroke-width="0.8" />
<line x1="689.70" y1="416.50" x2="689.70" y2="420.10" stroke="#333" stroke-width="0.8" />
<line x1="697.93" y1="416.50" x2="697.93" y2="418.40" stroke="#333" stroke-width="0.8" />
<line x1="706.16" y1="416.50" x2="706.16" y2="418.40" stroke="#333" stroke-width="0.8" />
<line x1="714.39" y1="416.50" x2="714.39" y2="418.40" stroke="#333" stroke-width="0.8" />
<line x1="722.62" y1="416.50" x2="722.62" y2="418.40" stroke="#333" stroke-width="0.8" />
<line x1="730.85" y1="416.50" x2="730.85" y2="420.10" stroke="#333" stroke-width="0.8" />
<line x1="739.08" y1="416.50" x2="739.08" y2="418.40" stroke="#333" stroke-width="0.8" />
<line x1="747.31" y1="416.50" x2="747.31" y2="418.40" stroke="#333" stroke-width="0.8" />
<line x1="755.54" y1="416.50" x2="755.54" y2="418.40" stroke="#333" stroke-width="0.8" />
<line x1="763.77" y1="416.50" x2="763.77" y2="418.40" stroke="#333" stroke-width="0.8" />
<line x1="772.00" y1="416.50" x2="772.00" y2="420.10" stroke="#333" stroke-width="0.8" />
<line x1="780.23" y1="416.50" x2="780.23" y2="418.40" stroke="#333" stroke-width="0.8" />
<line x1="788.46" y1="416.50" x2="788.46" y2="418.40" stroke="#333" stroke-width="0.8" />
<line x1="796.69" y1="416.50" x2="796.69" y2="418.40" stroke="#333" stroke-width="0.8" />
<line x1="804.92" y1="416.50" x2="804.92" y2="418.40" stroke="#333" stroke-width="0.8" />
<line x1="813.15" y1="416.50" x2="813.15" y2="420.10" stroke="#333" stroke-width="0.8" />
<line x1="821.38" y1="416.50" x2="821.38" y2="418.40" stroke="#333" stroke-width="0.8" />
<line x1="829.61" y1="416.50" x2="829.61" y2="418.40" stroke="#333" stroke-width="0.8" />
<line x1="837.84" y1="416.50" x2="837.84" y2="418.40" stroke="#333" stroke-width="0.8" />
<line x1="846.07" y1="416.50" x2="846.07" y2="418.40" stroke="#333" stroke-width="0.8" />
<line x1="854.30" y1="416.50" x2="854.30" y2="420.10" stroke="#333" stroke-width="0.8" />
<line x1="862.53" y1="416.50" x2="862.53" y2="418.40" stroke="#333" stroke-width="0.8" />
<line x1="870.76" y1="416.50" x2="870.76" y2="418.40" stroke="#333" stroke-width="0.8" />
<line x1="878.99" y1="416.50" x2="878.99" y2="418.40" stroke="#333" stroke-width="0.8" />
<line x1="887.22" y1="416.50" x2="887.22" y2="418.40" stroke="#333" stroke-width="0.8" />
<line x1="895.45" y1="416.50" x2="895.45" y2="420.10" stroke="#333" stroke-width="0.8" />
<line x1="903.68" y1="416.50" x2="903.68" y2="418.40" stroke="#333" stroke-width="0.8" />
<line x1="911.91" y1="416.50" x2="911.91" y2="418.40" stroke="#333" stroke-width="0.8" />
<line x1="920.14" y1="416.50" x2="920.14" y2="418.40" stroke="#333" stroke-width="0.8" />
<line x1="928.37" y1="416.50" x2="928.37" y2="418.40" stroke="#333" stroke-width="0.8" />
<line x1="936.60" y1="416.50" x2="936.60" y2="420.10" stroke="#333" stroke-width="0.8" />
<line x1="944.83" y1="416.50" x2="944.83" y2="418.40" stroke="#333" stroke-width="0.8" />
<line x1="953.06" y1="416.50" x2="953.06" y2="418.40" stroke="#333" stroke-width="0.8" />
<line x1="526.00" y1="416.20" x2="956.40" y2="310.90" stroke="#3c3c3c" stroke-width="0.85" />
<line x1="522.80" y1="414.60" x2="529.60" y2="414.60" stroke="#f02020" stroke-width="0.9" />
<rect x="529.50" y="411.00" width="8.20" height="8.00" fill="#2a2ad8" stroke="#15156a" stroke-width=".8"/>
<rect x="563.90" y="404.80" width="5.80" height="5.80" fill="#5a4ae8" />
<rect x="564.45" y="405.40" width="5.05" height="5.00" fill="#d80a3c" />
<rect x="604.40" y="394.20" width="5.80" height="5.80" fill="#5a4ae8" />
<rect x="604.95" y="394.80" width="5.05" height="5.00" fill="#d80a3c" />
<rect x="933.10" y="307.50" width="5.80" height="5.80" fill="#5a4ae8" />
<rect x="933.65" y="308.10" width="5.05" height="5.00" fill="#d80a3c" />
<line x1="525.10" y1="441.40" x2="525.10" y2="552.60" stroke="#333" stroke-width="0.9" />
<line x1="525.10" y1="552.60" x2="955.20" y2="552.60" stroke="#333" stroke-width="0.9" />
<line x1="525.10" y1="503.50" x2="955.80" y2="503.50" stroke="#3a3a3a" stroke-width="0.85" />
<line x1="523.30" y1="550.01" x2="525.10" y2="550.01" stroke="#333" stroke-width="0.8" />
<line x1="521.70" y1="545.78" x2="525.10" y2="545.78" stroke="#333" stroke-width="0.8" />
<line x1="523.30" y1="541.55" x2="525.10" y2="541.55" stroke="#333" stroke-width="0.8" />
<line x1="523.30" y1="537.32" x2="525.10" y2="537.32" stroke="#333" stroke-width="0.8" />
<line x1="523.30" y1="533.10" x2="525.10" y2="533.10" stroke="#333" stroke-width="0.8" />
<line x1="523.30" y1="528.87" x2="525.10" y2="528.87" stroke="#333" stroke-width="0.8" />
<line x1="521.70" y1="524.64" x2="525.10" y2="524.64" stroke="#333" stroke-width="0.8" />
<line x1="523.30" y1="520.41" x2="525.10" y2="520.41" stroke="#333" stroke-width="0.8" />
<line x1="523.30" y1="516.18" x2="525.10" y2="516.18" stroke="#333" stroke-width="0.8" />
<line x1="523.30" y1="511.96" x2="525.10" y2="511.96" stroke="#333" stroke-width="0.8" />
<line x1="523.30" y1="507.73" x2="525.10" y2="507.73" stroke="#333" stroke-width="0.8" />
<line x1="521.70" y1="503.50" x2="525.10" y2="503.50" stroke="#333" stroke-width="0.8" />
<line x1="523.30" y1="499.27" x2="525.10" y2="499.27" stroke="#333" stroke-width="0.8" />
<line x1="523.30" y1="495.04" x2="525.10" y2="495.04" stroke="#333" stroke-width="0.8" />
<line x1="523.30" y1="490.82" x2="525.10" y2="490.82" stroke="#333" stroke-width="0.8" />
<line x1="523.30" y1="486.59" x2="525.10" y2="486.59" stroke="#333" stroke-width="0.8" />
<line x1="521.70" y1="482.36" x2="525.10" y2="482.36" stroke="#333" stroke-width="0.8" />
<line x1="523.30" y1="478.13" x2="525.10" y2="478.13" stroke="#333" stroke-width="0.8" />
<line x1="523.30" y1="473.90" x2="525.10" y2="473.90" stroke="#333" stroke-width="0.8" />
<line x1="523.30" y1="469.68" x2="525.10" y2="469.68" stroke="#333" stroke-width="0.8" />
<line x1="523.30" y1="465.45" x2="525.10" y2="465.45" stroke="#333" stroke-width="0.8" />
<line x1="521.70" y1="461.22" x2="525.10" y2="461.22" stroke="#333" stroke-width="0.8" />
<line x1="523.30" y1="456.99" x2="525.10" y2="456.99" stroke="#333" stroke-width="0.8" />
<line x1="523.30" y1="452.76" x2="525.10" y2="452.76" stroke="#333" stroke-width="0.8" />
<line x1="523.30" y1="448.54" x2="525.10" y2="448.54" stroke="#333" stroke-width="0.8" />
<line x1="523.30" y1="444.31" x2="525.10" y2="444.31" stroke="#333" stroke-width="0.8" />
<line x1="525.10" y1="552.60" x2="525.10" y2="556.20" stroke="#333" stroke-width="0.8" />
<line x1="533.33" y1="552.60" x2="533.33" y2="554.50" stroke="#333" stroke-width="0.8" />
<line x1="541.56" y1="552.60" x2="541.56" y2="554.50" stroke="#333" stroke-width="0.8" />
<line x1="549.79" y1="552.60" x2="549.79" y2="554.50" stroke="#333" stroke-width="0.8" />
<line x1="558.02" y1="552.60" x2="558.02" y2="554.50" stroke="#333" stroke-width="0.8" />
<line x1="566.25" y1="552.60" x2="566.25" y2="556.20" stroke="#333" stroke-width="0.8" />
<line x1="574.48" y1="552.60" x2="574.48" y2="554.50" stroke="#333" stroke-width="0.8" />
<line x1="582.71" y1="552.60" x2="582.71" y2="554.50" stroke="#333" stroke-width="0.8" />
<line x1="590.94" y1="552.60" x2="590.94" y2="554.50" stroke="#333" stroke-width="0.8" />
<line x1="599.17" y1="552.60" x2="599.17" y2="554.50" stroke="#333" stroke-width="0.8" />
<line x1="607.40" y1="552.60" x2="607.40" y2="556.20" stroke="#333" stroke-width="0.8" />
<line x1="615.63" y1="552.60" x2="615.63" y2="554.50" stroke="#333" stroke-width="0.8" />
<line x1="623.86" y1="552.60" x2="623.86" y2="554.50" stroke="#333" stroke-width="0.8" />
<line x1="632.09" y1="552.60" x2="632.09" y2="554.50" stroke="#333" stroke-width="0.8" />
<line x1="640.32" y1="552.60" x2="640.32" y2="554.50" stroke="#333" stroke-width="0.8" />
<line x1="648.55" y1="552.60" x2="648.55" y2="556.20" stroke="#333" stroke-width="0.8" />
<line x1="656.78" y1="552.60" x2="656.78" y2="554.50" stroke="#333" stroke-width="0.8" />
<line x1="665.01" y1="552.60" x2="665.01" y2="554.50" stroke="#333" stroke-width="0.8" />
<line x1="673.24" y1="552.60" x2="673.24" y2="554.50" stroke="#333" stroke-width="0.8" />
<line x1="681.47" y1="552.60" x2="681.47" y2="554.50" stroke="#333" stroke-width="0.8" />
<line x1="689.70" y1="552.60" x2="689.70" y2="556.20" stroke="#333" stroke-width="0.8" />
<line x1="697.93" y1="552.60" x2="697.93" y2="554.50" stroke="#333" stroke-width="0.8" />
<line x1="706.16" y1="552.60" x2="706.16" y2="554.50" stroke="#333" stroke-width="0.8" />
<line x1="714.39" y1="552.60" x2="714.39" y2="554.50" stroke="#333" stroke-width="0.8" />
<line x1="722.62" y1="552.60" x2="722.62" y2="554.50" stroke="#333" stroke-width="0.8" />
<line x1="730.85" y1="552.60" x2="730.85" y2="556.20" stroke="#333" stroke-width="0.8" />
<line x1="739.08" y1="552.60" x2="739.08" y2="554.50" stroke="#333" stroke-width="0.8" />
<line x1="747.31" y1="552.60" x2="747.31" y2="554.50" stroke="#333" stroke-width="0.8" />
<line x1="755.54" y1="552.60" x2="755.54" y2="554.50" stroke="#333" stroke-width="0.8" />
<line x1="763.77" y1="552.60" x2="763.77" y2="554.50" stroke="#333" stroke-width="0.8" />
<line x1="772.00" y1="552.60" x2="772.00" y2="556.20" stroke="#333" stroke-width="0.8" />
<line x1="780.23" y1="552.60" x2="780.23" y2="554.50" stroke="#333" stroke-width="0.8" />
<line x1="788.46" y1="552.60" x2="788.46" y2="554.50" stroke="#333" stroke-width="0.8" />
<line x1="796.69" y1="552.60" x2="796.69" y2="554.50" stroke="#333" stroke-width="0.8" />
<line x1="804.92" y1="552.60" x2="804.92" y2="554.50" stroke="#333" stroke-width="0.8" />
<line x1="813.15" y1="552.60" x2="813.15" y2="556.20" stroke="#333" stroke-width="0.8" />
<line x1="821.38" y1="552.60" x2="821.38" y2="554.50" stroke="#333" stroke-width="0.8" />
<line x1="829.61" y1="552.60" x2="829.61" y2="554.50" stroke="#333" stroke-width="0.8" />
<line x1="837.84" y1="552.60" x2="837.84" y2="554.50" stroke="#333" stroke-width="0.8" />
<line x1="846.07" y1="552.60" x2="846.07" y2="554.50" stroke="#333" stroke-width="0.8" />
<line x1="854.30" y1="552.60" x2="854.30" y2="556.20" stroke="#333" stroke-width="0.8" />
<line x1="862.53" y1="552.60" x2="862.53" y2="554.50" stroke="#333" stroke-width="0.8" />
<line x1="870.76" y1="552.60" x2="870.76" y2="554.50" stroke="#333" stroke-width="0.8" />
<line x1="878.99" y1="552.60" x2="878.99" y2="554.50" stroke="#333" stroke-width="0.8" />
<line x1="887.22" y1="552.60" x2="887.22" y2="554.50" stroke="#333" stroke-width="0.8" />
<line x1="895.45" y1="552.60" x2="895.45" y2="556.20" stroke="#333" stroke-width="0.8" />
<line x1="903.68" y1="552.60" x2="903.68" y2="554.50" stroke="#333" stroke-width="0.8" />
<line x1="911.91" y1="552.60" x2="911.91" y2="554.50" stroke="#333" stroke-width="0.8" />
<line x1="920.14" y1="552.60" x2="920.14" y2="554.50" stroke="#333" stroke-width="0.8" />
<line x1="928.37" y1="552.60" x2="928.37" y2="554.50" stroke="#333" stroke-width="0.8" />
<line x1="936.60" y1="552.60" x2="936.60" y2="556.20" stroke="#333" stroke-width="0.8" />
<line x1="944.83" y1="552.60" x2="944.83" y2="554.50" stroke="#333" stroke-width="0.8" />
<line x1="953.06" y1="552.60" x2="953.06" y2="554.50" stroke="#333" stroke-width="0.8" />
<rect x="529.60" y="488.80" width="8.20" height="8.00" fill="#2a2ad8" stroke="#15156a" stroke-width=".8"/>
<rect x="563.70" y="544.20" width="5.80" height="5.80" fill="#5a4ae8" />
<rect x="564.25" y="544.80" width="5.05" height="5.00" fill="#d80a3c" />
<rect x="604.30" y="524.50" width="5.80" height="5.80" fill="#5a4ae8" />
<rect x="604.85" y="525.10" width="5.05" height="5.00" fill="#d80a3c" />
<rect x="933.20" y="442.60" width="5.80" height="5.80" fill="#5a4ae8" />
<rect x="933.75" y="443.20" width="5.05" height="5.00" fill="#d80a3c" />
<line x1="958.60" y1="1.70" x2="958.60" y2="575.00" stroke="#3c4a5a" stroke-width="1.1" />
<line x1="2.40" y1="574.60" x2="959.00" y2="574.60" stroke="#4d6378" stroke-width="1.2" />
<rect x="959.20" y="0.00" width="4.00" height="579.00" fill="#fff" />
<rect x="0.00" y="575.20" width="963.00" height="4.00" fill="#fff" />
</svg>
<div id="tx">
<div class="t" style="top:5.90px;font-size:8.05px;line-height:12px;color:#262626;left:21.30px;">LabSolutions Insight (Admin) - (Batch1.lcb - Method1.lcm)</div>
<div class="t" style="top:24.55px;font-size:7.6px;line-height:10px;color:#000;left:-59.40px;width:200px;text-align:center;"><span class="c">快捷</span></div>
<div class="t" style="top:39.45px;font-size:7.6px;line-height:10px;color:#000;left:-59.40px;width:200px;text-align:center;"><span class="c">文件</span></div>
<div class="t" style="top:54.25px;font-size:7.6px;line-height:10px;color:#000;left:-59.40px;width:200px;text-align:center;"><span class="c">显示</span></div>
<div class="t" style="top:531.95px;font-size:7.6px;line-height:10px;color:#000;left:-59.40px;width:200px;text-align:center;"><span class="c">编辑</span></div>
<div class="t" style="top:547.15px;font-size:7.6px;line-height:10px;color:#000;left:-59.40px;width:200px;text-align:center;"><span class="c">预览</span></div>
<div class="t" style="top:562.45px;font-size:7.6px;line-height:10px;color:#000;left:-59.40px;width:200px;text-align:center;"><span class="c">报告</span></div>
<div class="t" style="top:114.35px;font-size:7.5px;line-height:10px;color:#000;left:-62.70px;width:200px;text-align:center;"><span class="c">化合物</span></div>
<div class="t" style="top:168.75px;font-size:7.5px;line-height:10px;color:#000;left:-62.70px;width:200px;text-align:center;"><span class="c">全部</span></div>
<div class="t" style="top:223.15px;font-size:7.5px;line-height:10px;color:#000;left:-60.20px;width:200px;text-align:center;"><span class="c">化合物信息</span></div>
<div class="t" style="top:277.55px;font-size:7.5px;line-height:10px;color:#000;left:-60.20px;width:200px;text-align:center;"><span class="c">校准曲线</span></div>
<div class="t" style="top:331.95px;font-size:7.5px;line-height:10px;color:#000;left:-60.20px;width:200px;text-align:center;"><span class="c">监控</span></div>
<div class="t" style="top:386.35px;font-size:7.5px;line-height:10px;color:#000;left:-62.70px;width:200px;text-align:center;"><span class="c">质控图</span></div>
<div class="t" style="top:440.75px;font-size:7.5px;line-height:10px;color:#000;left:-60.20px;width:200px;text-align:center;"><span class="c">设置</span></div>
<div class="t" style="top:495.15px;font-size:7.5px;line-height:10px;color:#000;left:-60.20px;width:200px;text-align:center;"><span class="c">审查追踪</span></div>
<div class="t" style="top:23.05px;font-size:7.7px;line-height:10px;color:#1a1a1a;left:104.10px;"><span class="c">样品列表</span></div>
<div class="t" style="top:23.05px;font-size:7.7px;line-height:10px;color:#1a1a1a;left:505.00px;"><span class="c">定量结果</span>(<span class="c">化合物</span>) - Std01</div>
<div class="t" style="top:276.35px;font-size:7.7px;line-height:10px;color:#1a1a1a;left:104.10px;"><span class="c">化合物信息</span> - Std01 - A</div>
<div class="t" style="top:276.35px;font-size:7.7px;line-height:10px;color:#1a1a1a;left:510.30px;"><span class="c">校准曲线</span> - A</div>
<div class="t" style="top:34.55px;font-size:7.96px;line-height:10px;color:#000;left:8.00px;width:200px;text-align:center;transform:scaleX(0.930);transform-origin:50% 50%;white-space:nowrap;">#</div>
<div class="t" style="top:35.15px;font-size:7.4px;line-height:10px;color:#000;left:131.60px;white-space:nowrap;"><span class="c">标记</span></div>
<div class="t" style="top:35.15px;font-size:7.4px;line-height:10px;color:#000;left:153.40px;white-space:nowrap;"><span class="c">数据文件名</span></div>
<div class="t" style="top:35.15px;font-size:7.4px;line-height:10px;color:#dadada;left:200.40px;white-space:nowrap;"><span class="c">样品名称</span></div>
<div class="t" style="top:35.15px;font-size:7.4px;line-height:10px;color:#000;left:237.00px;white-space:nowrap;"><span class="c">标记</span>ID</div>
<div class="t" style="top:35.15px;font-size:7.4px;line-height:10px;color:#000;left:280.20px;white-space:nowrap;"><span class="c">样品类型</span></div>
<div class="t" style="top:35.15px;font-size:7.4px;line-height:10px;color:#000;left:314.20px;white-space:nowrap;"><span class="c">校准点</span></div>
<div class="t" style="top:35.15px;font-size:7.4px;line-height:10px;color:#000;left:341.20px;white-space:nowrap;"><span class="c">级别</span></div>
<div class="t" style="top:35.15px;font-size:7.4px;line-height:10px;color:#000;left:360.60px;white-space:nowrap;"><span class="c">分析日期和时间</span></div>
<div class="t" style="top:35.15px;font-size:7.4px;line-height:10px;color:#000;left:435.80px;white-space:nowrap;"><span class="c">样品瓶</span></div>
<div class="t" style="top:35.15px;font-size:7.4px;line-height:10px;color:#000;left:465.40px;white-space:nowrap;"><span class="c">样品瓶</span></div>
<div class="t" style="top:58.06px;font-size:8.38px;line-height:10px;color:#e6e6e6;right:839.80px;text-align:right;transform:scaleX(0.930);transform-origin:100% 50%;">1</div>
<div class="t" style="top:58.06px;font-size:8.38px;line-height:10px;color:#e6e6e6;left:153.60px;transform:scaleX(0.930);transform-origin:0 50%;">Std01</div>
<div class="t" style="top:58.66px;font-size:7.4px;line-height:10px;color:#000;left:280.40px;"><span class="c">标准</span></div>
<div class="t" style="top:58.06px;font-size:8.38px;line-height:10px;color:#000;right:607.40px;text-align:right;transform:scaleX(0.930);transform-origin:100% 50%;">1</div>
<div class="t" style="top:58.06px;font-size:8.33px;line-height:10px;color:#000;left:361.80px;transform:scaleX(0.930);transform-origin:0 50%;">2010/5/25 14:03:20</div>
<div class="t" style="top:58.06px;font-size:8.38px;line-height:10px;color:#000;right:502.40px;text-align:right;transform:scaleX(0.930);transform-origin:100% 50%;">1</div>
<div class="t" style="top:58.06px;font-size:8.38px;line-height:10px;color:#000;left:466.20px;transform:scaleX(0.930);transform-origin:0 50%;">1</div>
<div class="t" style="top:69.68px;font-size:8.38px;line-height:10px;color:#000;right:839.80px;text-align:right;transform:scaleX(0.930);transform-origin:100% 50%;">2</div>
<div class="t" style="top:69.68px;font-size:8.38px;line-height:10px;color:#000;left:153.60px;transform:scaleX(0.930);transform-origin:0 50%;">Std02</div>
<div class="t" style="top:70.28px;font-size:7.4px;line-height:10px;color:#000;left:280.40px;"><span class="c">标准</span></div>
<div class="t" style="top:69.68px;font-size:8.38px;line-height:10px;color:#000;right:607.40px;text-align:right;transform:scaleX(0.930);transform-origin:100% 50%;">2</div>
<div class="t" style="top:69.68px;font-size:8.33px;line-height:10px;color:#000;left:361.80px;transform:scaleX(0.930);transform-origin:0 50%;">2010/5/25 14:07:00</div>
<div class="t" style="top:69.68px;font-size:8.38px;line-height:10px;color:#000;right:502.40px;text-align:right;transform:scaleX(0.930);transform-origin:100% 50%;">2</div>
<div class="t" style="top:69.68px;font-size:8.38px;line-height:10px;color:#000;left:466.20px;transform:scaleX(0.930);transform-origin:0 50%;">1</div>
<div class="t" style="top:81.30px;font-size:8.38px;line-height:10px;color:#000;right:839.80px;text-align:right;transform:scaleX(0.930);transform-origin:100% 50%;">3</div>
<div class="t" style="top:81.30px;font-size:8.38px;line-height:10px;color:#000;left:153.60px;transform:scaleX(0.930);transform-origin:0 50%;">Std03</div>
<div class="t" style="top:81.90px;font-size:7.4px;line-height:10px;color:#000;left:280.40px;"><span class="c">标准</span></div>
<div class="t" style="top:81.30px;font-size:8.38px;line-height:10px;color:#000;right:607.40px;text-align:right;transform:scaleX(0.930);transform-origin:100% 50%;">3</div>
<div class="t" style="top:81.30px;font-size:8.33px;line-height:10px;color:#000;left:361.80px;transform:scaleX(0.930);transform-origin:0 50%;">2010/5/25 14:10:40</div>
<div class="t" style="top:81.30px;font-size:8.38px;line-height:10px;color:#000;right:502.40px;text-align:right;transform:scaleX(0.930);transform-origin:100% 50%;">3</div>
<div class="t" style="top:81.30px;font-size:8.38px;line-height:10px;color:#000;left:466.20px;transform:scaleX(0.930);transform-origin:0 50%;">1</div>
<div class="t" style="top:92.92px;font-size:8.38px;line-height:10px;color:#000;right:839.80px;text-align:right;transform:scaleX(0.930);transform-origin:100% 50%;">4</div>
<div class="t" style="top:92.92px;font-size:8.38px;line-height:10px;color:#000;left:153.60px;transform:scaleX(0.930);transform-origin:0 50%;">Std04</div>
<div class="t" style="top:93.52px;font-size:7.4px;line-height:10px;color:#000;left:280.40px;"><span class="c">标准</span></div>
<div class="t" style="top:92.92px;font-size:8.38px;line-height:10px;color:#000;right:607.40px;text-align:right;transform:scaleX(0.930);transform-origin:100% 50%;">4</div>
<div class="t" style="top:92.92px;font-size:8.33px;line-height:10px;color:#000;left:361.80px;transform:scaleX(0.930);transform-origin:0 50%;">2010/5/25 14:14:21</div>
<div class="t" style="top:92.92px;font-size:8.38px;line-height:10px;color:#000;right:502.40px;text-align:right;transform:scaleX(0.930);transform-origin:100% 50%;">4</div>
<div class="t" style="top:92.92px;font-size:8.38px;line-height:10px;color:#000;left:466.20px;transform:scaleX(0.930);transform-origin:0 50%;">1</div>
<div class="t" style="top:104.54px;font-size:8.38px;line-height:10px;color:#000;right:839.80px;text-align:right;transform:scaleX(0.930);transform-origin:100% 50%;">5</div>
<div class="t" style="top:104.54px;font-size:8.38px;line-height:10px;color:#000;left:153.60px;transform:scaleX(0.930);transform-origin:0 50%;">Unk01</div>
<div class="t" style="top:104.54px;font-size:8.17px;line-height:10px;color:#000;left:237.20px;transform:scaleX(0.930);transform-origin:0 50%;">&lt;L</div>
<div class="t" style="top:105.14px;font-size:7.4px;line-height:10px;color:#000;left:280.40px;"><span class="c">未知</span></div>
<div class="t" style="top:104.59px;font-size:8.6px;line-height:10px;color:#222;right:606.40px;text-align:right;letter-spacing:.2px;-webkit-text-stroke:.1px currentColor;">----</div>
<div class="t" style="top:104.54px;font-size:8.33px;line-height:10px;color:#000;left:361.80px;transform:scaleX(0.930);transform-origin:0 50%;">2010/5/25 18:45:59</div>
<div class="t" style="top:104.54px;font-size:8.38px;line-height:10px;color:#000;right:502.40px;text-align:right;transform:scaleX(0.930);transform-origin:100% 50%;">5</div>
<div class="t" style="top:104.54px;font-size:8.38px;line-height:10px;color:#000;left:466.20px;transform:scaleX(0.930);transform-origin:0 50%;">1</div>
<div class="t" style="top:116.16px;font-size:8.38px;line-height:10px;color:#000;right:839.80px;text-align:right;transform:scaleX(0.930);transform-origin:100% 50%;">6</div>
<div class="t" style="top:116.16px;font-size:8.38px;line-height:10px;color:#000;left:153.60px;transform:scaleX(0.930);transform-origin:0 50%;">Unk02</div>
<div class="t" style="top:116.16px;font-size:8.17px;line-height:10px;color:#000;left:237.20px;transform:scaleX(0.930);transform-origin:0 50%;">&lt;L, &gt;R</div>
<div class="t" style="top:116.76px;font-size:7.4px;line-height:10px;color:#000;left:280.40px;"><span class="c">未知</span></div>
<div class="t" style="top:116.21px;font-size:8.6px;line-height:10px;color:#222;right:606.40px;text-align:right;letter-spacing:.2px;-webkit-text-stroke:.1px currentColor;">----</div>
<div class="t" style="top:116.16px;font-size:8.33px;line-height:10px;color:#000;left:361.80px;transform:scaleX(0.930);transform-origin:0 50%;">2010/5/25 18:49:40</div>
<div class="t" style="top:116.16px;font-size:8.38px;line-height:10px;color:#000;right:502.40px;text-align:right;transform:scaleX(0.930);transform-origin:100% 50%;">6</div>
<div class="t" style="top:116.16px;font-size:8.38px;line-height:10px;color:#000;left:466.20px;transform:scaleX(0.930);transform-origin:0 50%;">1</div>
<div class="t" style="top:127.78px;font-size:8.38px;line-height:10px;color:#000;right:839.80px;text-align:right;transform:scaleX(0.930);transform-origin:100% 50%;">7</div>
<div class="t" style="top:127.78px;font-size:8.38px;line-height:10px;color:#000;left:153.60px;transform:scaleX(0.930);transform-origin:0 50%;">Unk03</div>
<div class="t" style="top:127.78px;font-size:8.17px;line-height:10px;color:#000;left:237.20px;transform:scaleX(0.930);transform-origin:0 50%;">&lt;L, &gt;L, &gt;R</div>
<div class="t" style="top:128.38px;font-size:7.4px;line-height:10px;color:#000;left:280.40px;"><span class="c">未知</span></div>
<div class="t" style="top:127.83px;font-size:8.6px;line-height:10px;color:#222;right:606.40px;text-align:right;letter-spacing:.2px;-webkit-text-stroke:.1px currentColor;">----</div>
<div class="t" style="top:127.78px;font-size:8.33px;line-height:10px;color:#000;left:361.80px;transform:scaleX(0.930);transform-origin:0 50%;">2010/5/25 18:53:21</div>
<div class="t" style="top:127.78px;font-size:8.38px;line-height:10px;color:#000;right:502.40px;text-align:right;transform:scaleX(0.930);transform-origin:100% 50%;">7</div>
<div class="t" style="top:127.78px;font-size:8.38px;line-height:10px;color:#000;left:466.20px;transform:scaleX(0.930);transform-origin:0 50%;">1</div>
<div class="t" style="top:34.55px;font-size:7.96px;line-height:10px;color:#000;left:408.10px;width:200px;text-align:center;transform:scaleX(0.930);transform-origin:50% 50%;white-space:nowrap;">#</div>
<div class="t" style="top:35.15px;font-size:7.4px;line-height:10px;color:#000;left:533.00px;white-space:nowrap;"><span class="c">标记</span></div>
<div class="t" style="top:35.15px;font-size:7.4px;line-height:10px;color:#000;left:555.40px;white-space:nowrap;"><span class="c">标记</span>ID</div>
<div class="t" style="top:35.15px;font-size:7.4px;line-height:10px;color:#000;left:583.80px;white-space:nowrap;"><span class="c">化合物名称</span></div>
<div class="t" style="top:35.15px;font-size:7.4px;line-height:10px;color:#000;left:626.40px;white-space:nowrap;"><span class="c">状态</span></div>
<div class="t" style="top:35.15px;font-size:7.4px;line-height:10px;color:#000;right:257.60px;text-align:right;white-space:nowrap;"><span class="c">保留时间</span>(<span class="c">实测</span>)</div>
<div class="t" style="top:35.15px;font-size:7.4px;line-height:10px;color:#000;right:196.10px;text-align:right;white-space:nowrap;"><span class="c">保留指数</span>(<span class="c">实测</span>)</div>
<div class="t" style="top:35.15px;font-size:7.4px;line-height:10px;color:#000;right:168.60px;text-align:right;white-space:nowrap;"><span class="c">浓度</span></div>
<div class="t" style="top:35.15px;font-size:7.4px;line-height:10px;color:#000;left:800.80px;white-space:nowrap;"><span class="c">单位</span></div>
<div class="t" style="top:34.55px;font-size:8.38px;line-height:10px;color:#000;left:822.80px;transform:scaleX(0.930);transform-origin:0 50%;white-space:nowrap;">m/z</div>
<div class="t" style="top:35.15px;font-size:7.4px;line-height:10px;color:#000;right:58.60px;text-align:right;white-space:nowrap;"><span class="c">面积</span></div>
<div class="t" style="top:35.15px;font-size:7.4px;line-height:10px;color:#fff;left:912.40px;white-space:nowrap;"><span class="c">内标面积</span></div>
<div class="t" style="top:58.06px;font-size:8.38px;line-height:10px;color:#fff;right:439.40px;text-align:right;transform:scaleX(0.930);transform-origin:100% 50%;">1</div>
<div class="t" style="top:58.06px;font-size:8.38px;line-height:10px;color:#fff;left:584.20px;transform:scaleX(0.930);transform-origin:0 50%;">A</div>
<div class="t" style="top:58.16px;font-size:7.3px;line-height:10px;color:#111;left:636.20px;"><span class="e">搁置</span></div>
<div class="t" style="top:58.06px;font-size:8.38px;line-height:10px;color:#000;right:258.40px;text-align:right;transform:scaleX(0.930);transform-origin:100% 50%;">0.637</div>
<div class="t" style="top:58.06px;font-size:8.38px;line-height:10px;color:#000;right:196.10px;text-align:right;transform:scaleX(0.930);transform-origin:100% 50%;">0.00</div>
<div class="t" style="top:58.06px;font-size:8.38px;line-height:10px;color:#000;right:167.40px;text-align:right;transform:scaleX(0.930);transform-origin:100% 50%;">0.0101</div>
<div class="t" style="top:58.06px;font-size:8.38px;line-height:10px;color:#000;left:801.60px;transform:scaleX(0.930);transform-origin:0 50%;">ppm</div>
<div class="t" style="top:58.06px;font-size:8.33px;line-height:10px;color:#000;left:822.90px;transform:scaleX(0.930);transform-origin:0 50%;">237.00&gt;100.20</div>
<div class="t" style="top:58.06px;font-size:8.38px;line-height:10px;color:#000;right:57.70px;text-align:right;transform:scaleX(0.930);transform-origin:100% 50%;">36195</div>
<div class="t" style="top:58.11px;font-size:8.6px;line-height:10px;color:#fff;right:19.40px;text-align:right;letter-spacing:.2px;-webkit-text-stroke:.1px currentColor;">----</div>
<div class="t" style="top:69.68px;font-size:8.38px;line-height:10px;color:#000;right:439.40px;text-align:right;transform:scaleX(0.930);transform-origin:100% 50%;">2</div>
<div class="t" style="top:69.68px;font-size:8.38px;line-height:10px;color:#000;left:584.20px;transform:scaleX(0.930);transform-origin:0 50%;">B</div>
<div class="t" style="top:69.78px;font-size:7.3px;line-height:10px;color:#111;left:636.20px;"><span class="e">搁置</span></div>
<div class="t" style="top:69.68px;font-size:8.38px;line-height:10px;color:#000;right:258.40px;text-align:right;transform:scaleX(0.930);transform-origin:100% 50%;">1.226</div>
<div class="t" style="top:69.68px;font-size:8.38px;line-height:10px;color:#000;right:196.10px;text-align:right;transform:scaleX(0.930);transform-origin:100% 50%;">0.00</div>
<div class="t" style="top:69.68px;font-size:8.38px;line-height:10px;color:#000;right:167.40px;text-align:right;transform:scaleX(0.930);transform-origin:100% 50%;">0.0100</div>
<div class="t" style="top:69.68px;font-size:8.38px;line-height:10px;color:#000;left:801.60px;transform:scaleX(0.930);transform-origin:0 50%;">ppm</div>
<div class="t" style="top:69.68px;font-size:8.33px;line-height:10px;color:#000;left:822.90px;transform:scaleX(0.930);transform-origin:0 50%;">455.20&gt;165.05</div>
<div class="t" style="top:69.68px;font-size:8.38px;line-height:10px;color:#000;right:57.70px;text-align:right;transform:scaleX(0.930);transform-origin:100% 50%;">31817</div>
<div class="t" style="top:69.73px;font-size:8.6px;line-height:10px;color:#222;right:19.40px;text-align:right;letter-spacing:.2px;-webkit-text-stroke:.1px currentColor;">----</div>
<div class="t" style="top:81.30px;font-size:8.38px;line-height:10px;color:#000;right:439.40px;text-align:right;transform:scaleX(0.930);transform-origin:100% 50%;">3</div>
<div class="t" style="top:81.30px;font-size:8.38px;line-height:10px;color:#000;left:584.20px;transform:scaleX(0.930);transform-origin:0 50%;">C</div>
<div class="t" style="top:81.40px;font-size:7.3px;line-height:10px;color:#111;left:636.20px;"><span class="e">搁置</span></div>
<div class="t" style="top:81.30px;font-size:8.38px;line-height:10px;color:#000;right:258.40px;text-align:right;transform:scaleX(0.930);transform-origin:100% 50%;">1.566</div>
<div class="t" style="top:81.30px;font-size:8.38px;line-height:10px;color:#000;right:196.10px;text-align:right;transform:scaleX(0.930);transform-origin:100% 50%;">0.00</div>
<div class="t" style="top:81.30px;font-size:8.38px;line-height:10px;color:#000;right:167.40px;text-align:right;transform:scaleX(0.930);transform-origin:100% 50%;">0.0099</div>
<div class="t" style="top:81.30px;font-size:8.38px;line-height:10px;color:#000;left:801.60px;transform:scaleX(0.930);transform-origin:0 50%;">ppm</div>
<div class="t" style="top:81.30px;font-size:8.33px;line-height:10px;color:#000;left:822.90px;transform:scaleX(0.930);transform-origin:0 50%;">309.00&gt;162.95</div>
<div class="t" style="top:81.30px;font-size:8.38px;line-height:10px;color:#000;right:57.70px;text-align:right;transform:scaleX(0.930);transform-origin:100% 50%;">24275</div>
<div class="t" style="top:81.35px;font-size:8.6px;line-height:10px;color:#222;right:19.40px;text-align:right;letter-spacing:.2px;-webkit-text-stroke:.1px currentColor;">----</div>
<div class="t" style="top:289.20px;font-size:6.99px;line-height:9px;color:#4a5cae;left:91.80px;transform:scaleX(0.930);transform-origin:0 50%;">Q 237.00&gt;100.20 (+)</div>
<div class="t" style="top:288.60px;font-size:6.99px;line-height:9px;color:#4a5cae;right:473.20px;text-align:right;transform:scaleX(0.930);transform-origin:100% 50%;">1.10e4</div>
<div class="t" style="top:303.20px;font-size:6.77px;line-height:9px;color:#111;right:851.10px;text-align:right;transform:scaleX(0.930);transform-origin:100% 50%;">100.00</div>
<div class="t" style="top:426.00px;font-size:6.99px;line-height:9px;color:#111;right:851.00px;text-align:right;transform:scaleX(0.930);transform-origin:100% 50%;">%</div>
<div class="t" style="top:549.00px;font-size:6.77px;line-height:9px;color:#111;right:851.10px;text-align:right;transform:scaleX(0.930);transform-origin:100% 50%;">0.00</div>
<div class="t" style="top:558.80px;font-size:6.99px;line-height:9px;color:#111;left:16.90px;width:200px;text-align:center;transform:scaleX(0.930);transform-origin:50% 50%;">0.0</div>
<div class="t" style="top:558.80px;font-size:6.99px;line-height:9px;color:#111;left:46.74px;width:200px;text-align:center;transform:scaleX(0.930);transform-origin:50% 50%;">0.2</div>
<div class="t" style="top:558.80px;font-size:6.99px;line-height:9px;color:#111;left:76.58px;width:200px;text-align:center;transform:scaleX(0.930);transform-origin:50% 50%;">0.4</div>
<div class="t" style="top:558.80px;font-size:6.99px;line-height:9px;color:#111;left:106.42px;width:200px;text-align:center;transform:scaleX(0.930);transform-origin:50% 50%;">0.6</div>
<div class="t" style="top:558.80px;font-size:6.99px;line-height:9px;color:#111;left:136.26px;width:200px;text-align:center;transform:scaleX(0.930);transform-origin:50% 50%;">0.8</div>
<div class="t" style="top:558.80px;font-size:6.99px;line-height:9px;color:#111;left:166.10px;width:200px;text-align:center;transform:scaleX(0.930);transform-origin:50% 50%;">1.0</div>
<div class="t" style="top:558.80px;font-size:6.99px;line-height:9px;color:#111;left:195.94px;width:200px;text-align:center;transform:scaleX(0.930);transform-origin:50% 50%;">1.2</div>
<div class="t" style="top:558.80px;font-size:6.99px;line-height:9px;color:#111;left:225.78px;width:200px;text-align:center;transform:scaleX(0.930);transform-origin:50% 50%;">1.4</div>
<div class="t" style="top:558.80px;font-size:6.99px;line-height:9px;color:#111;left:255.62px;width:200px;text-align:center;transform:scaleX(0.930);transform-origin:50% 50%;">1.6</div>
<div class="t" style="top:558.80px;font-size:6.99px;line-height:9px;color:#111;left:285.46px;width:200px;text-align:center;transform:scaleX(0.930);transform-origin:50% 50%;">1.8</div>
<div class="t" style="top:558.80px;font-size:6.99px;line-height:9px;color:#111;left:315.30px;width:200px;text-align:center;transform:scaleX(0.930);transform-origin:50% 50%;">2.0</div>
<div class="t" style="top:558.80px;font-size:6.99px;line-height:9px;color:#111;left:345.14px;width:200px;text-align:center;transform:scaleX(0.930);transform-origin:50% 50%;">2.2</div>
<div class="t" style="top:558.80px;font-size:6.99px;line-height:9px;color:#111;left:374.98px;width:200px;text-align:center;transform:scaleX(0.930);transform-origin:50% 50%;">2.4</div>
<div class="t" style="top:565.50px;font-size:6.3px;line-height:9px;color:#111;right:475.40px;text-align:right;white-space:pre;"><span class="d">保留时间</span>  (min)</div>
<div class="t" style="top:289.20px;font-size:6.99px;line-height:9px;color:#111;left:216.80px;transform:scaleX(0.930);transform-origin:0 50%;"><span style="font-size:5.6px;position:relative;top:.8px">RT</span>=0.637</div>
<div class="t" style="top:297.40px;font-size:6.99px;line-height:9px;color:#111;left:217.00px;transform:scaleX(0.930);transform-origin:0 50%;">C=0.0101</div>
<div class="t" style="top:289.20px;font-size:6.99px;line-height:9px;color:#111;left:499.10px;transform:scaleX(0.930);transform-origin:0 50%;text-decoration:underline;text-decoration-thickness:.6px;text-underline-offset:.6px;">Q 237.00&gt;100.20</div>
<div class="t" style="top:337.40px;font-size:6.88px;line-height:9px;color:#111;right:442.70px;text-align:right;transform:scaleX(0.930);transform-origin:100% 50%;">1.5e6</div>
<div class="t" style="top:362.50px;font-size:6.88px;line-height:9px;color:#111;right:442.70px;text-align:right;transform:scaleX(0.930);transform-origin:100% 50%;">1.0e6</div>
<div class="t" style="top:387.60px;font-size:6.88px;line-height:9px;color:#111;right:442.70px;text-align:right;transform:scaleX(0.930);transform-origin:100% 50%;">5.0e5</div>
<div class="t" style="top:412.70px;font-size:6.88px;line-height:9px;color:#111;right:442.70px;text-align:right;transform:scaleX(0.930);transform-origin:100% 50%;">0.0e0</div>
<div class="t" style="top:421.20px;font-size:6.99px;line-height:9px;color:#111;left:425.10px;width:200px;text-align:center;transform:scaleX(0.930);transform-origin:50% 50%;">0.00</div>
<div class="t" style="top:421.20px;font-size:6.99px;line-height:9px;color:#111;left:466.25px;width:200px;text-align:center;transform:scaleX(0.930);transform-origin:50% 50%;">0.05</div>
<div class="t" style="top:421.20px;font-size:6.99px;line-height:9px;color:#111;left:507.40px;width:200px;text-align:center;transform:scaleX(0.930);transform-origin:50% 50%;">0.10</div>
<div class="t" style="top:421.20px;font-size:6.99px;line-height:9px;color:#111;left:548.55px;width:200px;text-align:center;transform:scaleX(0.930);transform-origin:50% 50%;">0.15</div>
<div class="t" style="top:421.20px;font-size:6.99px;line-height:9px;color:#111;left:589.70px;width:200px;text-align:center;transform:scaleX(0.930);transform-origin:50% 50%;">0.20</div>
<div class="t" style="top:421.20px;font-size:6.99px;line-height:9px;color:#111;left:630.85px;width:200px;text-align:center;transform:scaleX(0.930);transform-origin:50% 50%;">0.25</div>
<div class="t" style="top:421.20px;font-size:6.99px;line-height:9px;color:#111;left:672.00px;width:200px;text-align:center;transform:scaleX(0.930);transform-origin:50% 50%;">0.30</div>
<div class="t" style="top:421.20px;font-size:6.99px;line-height:9px;color:#111;left:713.15px;width:200px;text-align:center;transform:scaleX(0.930);transform-origin:50% 50%;">0.35</div>
<div class="t" style="top:421.20px;font-size:6.99px;line-height:9px;color:#111;left:754.30px;width:200px;text-align:center;transform:scaleX(0.930);transform-origin:50% 50%;">0.40</div>
<div class="t" style="top:421.20px;font-size:6.99px;line-height:9px;color:#111;left:795.45px;width:200px;text-align:center;transform:scaleX(0.930);transform-origin:50% 50%;">0.45</div>
<div class="t" style="top:421.20px;font-size:6.99px;line-height:9px;color:#111;left:836.60px;width:200px;text-align:center;transform:scaleX(0.930);transform-origin:50% 50%;">0.50</div>
<div class="t" style="top:428.70px;font-size:6.3px;line-height:9px;color:#111;right:8.80px;text-align:right;white-space:pre;"><span class="d">浓度</span>  (ppm)</div>
<div class="t" style="left:470.60px;top:305.40px;width:60px;height:10px;line-height:10px;font-size:6.2px;color:#111;text-align:center;transform:rotate(-90deg);">面积</div>
<div class="t" style="left:470.60px;top:444.00px;width:60px;height:10px;line-height:10px;font-size:6.2px;color:#111;text-align:center;transform:rotate(-90deg);">面积%</div>
<div class="t" style="top:306.20px;font-size:6.93px;line-height:9px;color:#2a2a2a;left:527.90px;transform:scaleX(0.930);transform-origin:0 50%;">y = 3983773x - 4014.102</div>
<div class="t" style="top:314.20px;font-size:6.93px;line-height:9px;color:#2a2a2a;left:527.90px;transform:scaleX(0.930);transform-origin:0 50%;">R² = 0.9977929&nbsp;&nbsp;&nbsp;&nbsp;R = 0.9988958</div>
<div class="t" style="top:325.30px;font-size:6.45px;line-height:9px;color:#2a2a2a;left:527.90px;"><span class="d">校准曲线类型</span>: <u><span class="d">默认</span> (<span class="d">直线</span> )</u></div>
<div class="t" style="top:333.30px;font-size:6.45px;line-height:9px;color:#2a2a2a;left:527.90px;"><span class="d">加权</span>: <u><span class="d">默认</span> (1/C^2)</u></div>
<div class="t" style="top:341.40px;font-size:6.45px;line-height:9px;color:#2a2a2a;left:527.90px;"><span class="d">零截距</span>: <u><span class="d">默认</span> (<span class="d">未过原点</span>)</u></div>
<div class="t" style="top:354.50px;font-size:6.93px;line-height:9px;color:#2a2a2a;left:527.90px;transform:scaleX(0.930);transform-origin:0 50%;">Mean RF: 3.851308e+006</div>
<div class="t" style="top:362.60px;font-size:6.93px;line-height:9px;color:#2a2a2a;left:527.90px;transform:scaleX(0.930);transform-origin:0 50%;">SD RF: 2.457992e+005</div>
<div class="t" style="top:370.30px;font-size:6.93px;line-height:9px;color:#2a2a2a;left:527.90px;transform:scaleX(0.930);transform-origin:0 50%;">%RSD: 6.382226</div>
<div class="t" style="top:457.42px;font-size:6.88px;line-height:9px;color:#111;right:442.50px;text-align:right;transform:scaleX(0.930);transform-origin:100% 50%;">4</div>
<div class="t" style="top:478.56px;font-size:6.88px;line-height:9px;color:#111;right:442.50px;text-align:right;transform:scaleX(0.930);transform-origin:100% 50%;">2</div>
<div class="t" style="top:499.70px;font-size:6.88px;line-height:9px;color:#111;right:442.50px;text-align:right;transform:scaleX(0.930);transform-origin:100% 50%;">0</div>
<div class="t" style="top:520.84px;font-size:6.88px;line-height:9px;color:#111;right:442.50px;text-align:right;transform:scaleX(0.930);transform-origin:100% 50%;">-2</div>
<div class="t" style="top:541.98px;font-size:6.88px;line-height:9px;color:#111;right:442.50px;text-align:right;transform:scaleX(0.930);transform-origin:100% 50%;">-4</div>
<div class="t" style="top:557.60px;font-size:6.99px;line-height:9px;color:#111;left:425.10px;width:200px;text-align:center;transform:scaleX(0.930);transform-origin:50% 50%;">0.00</div>
<div class="t" style="top:557.60px;font-size:6.99px;line-height:9px;color:#111;left:466.25px;width:200px;text-align:center;transform:scaleX(0.930);transform-origin:50% 50%;">0.05</div>
<div class="t" style="top:557.60px;font-size:6.99px;line-height:9px;color:#111;left:507.40px;width:200px;text-align:center;transform:scaleX(0.930);transform-origin:50% 50%;">0.10</div>
<div class="t" style="top:557.60px;font-size:6.99px;line-height:9px;color:#111;left:548.55px;width:200px;text-align:center;transform:scaleX(0.930);transform-origin:50% 50%;">0.15</div>
<div class="t" style="top:557.60px;font-size:6.99px;line-height:9px;color:#111;left:589.70px;width:200px;text-align:center;transform:scaleX(0.930);transform-origin:50% 50%;">0.20</div>
<div class="t" style="top:557.60px;font-size:6.99px;line-height:9px;color:#111;left:630.85px;width:200px;text-align:center;transform:scaleX(0.930);transform-origin:50% 50%;">0.25</div>
<div class="t" style="top:557.60px;font-size:6.99px;line-height:9px;color:#111;left:672.00px;width:200px;text-align:center;transform:scaleX(0.930);transform-origin:50% 50%;">0.30</div>
<div class="t" style="top:557.60px;font-size:6.99px;line-height:9px;color:#111;left:713.15px;width:200px;text-align:center;transform:scaleX(0.930);transform-origin:50% 50%;">0.35</div>
<div class="t" style="top:557.60px;font-size:6.99px;line-height:9px;color:#111;left:754.30px;width:200px;text-align:center;transform:scaleX(0.930);transform-origin:50% 50%;">0.40</div>
<div class="t" style="top:557.60px;font-size:6.99px;line-height:9px;color:#111;left:795.45px;width:200px;text-align:center;transform:scaleX(0.930);transform-origin:50% 50%;">0.45</div>
<div class="t" style="top:557.60px;font-size:6.99px;line-height:9px;color:#111;left:836.60px;width:200px;text-align:center;transform:scaleX(0.930);transform-origin:50% 50%;">0.50</div>
<div class="t" style="top:564.90px;font-size:6.3px;line-height:9px;color:#111;right:8.80px;text-align:right;white-space:pre;"><span class="d">浓度</span>  (ppm)</div>
</div>
</body></html>
